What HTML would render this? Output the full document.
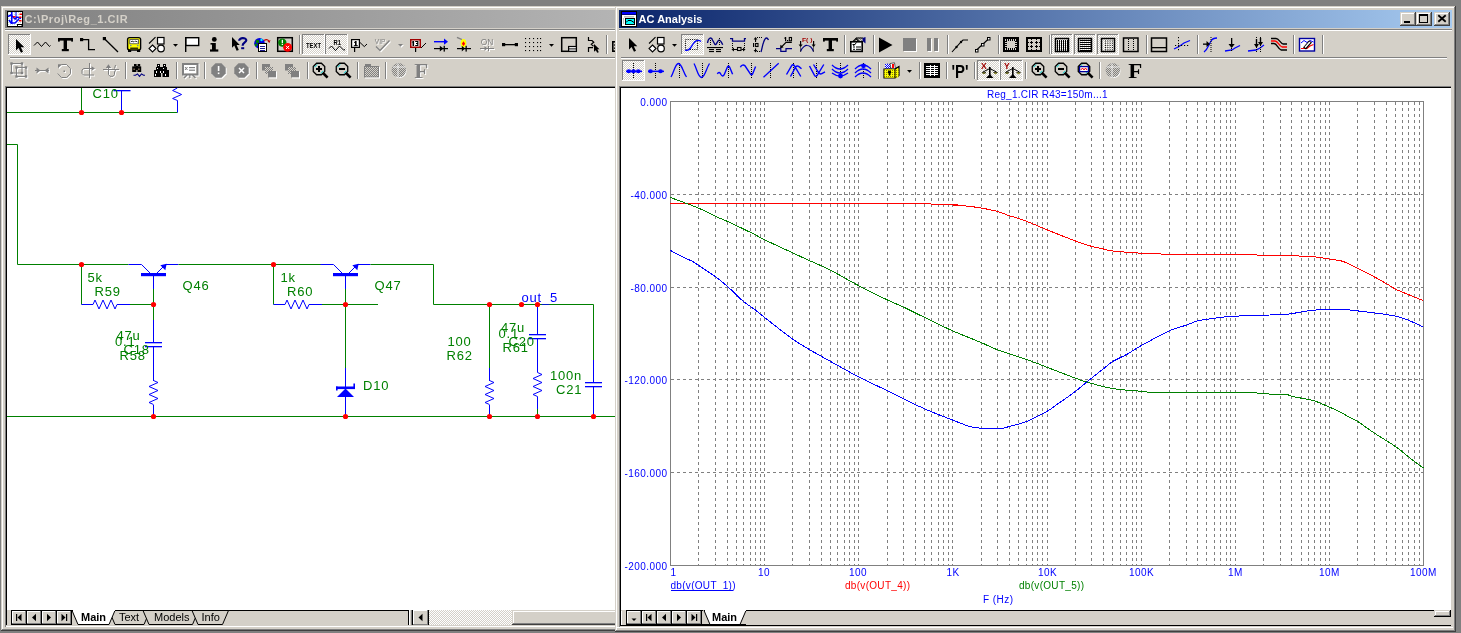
<!DOCTYPE html><html><head><meta charset="utf-8"><style>
html,body{margin:0;padding:0;width:1461px;height:633px;overflow:hidden;background:#808080;position:relative;font-family:"Liberation Sans",sans-serif}
div,span,svg{position:absolute}
svg{will-change:transform}
span{white-space:pre;line-height:1}
</style></head><body>
<svg width="0" height="0" style="left:0;top:0"><defs>
<pattern id="chk" width="2" height="2" patternUnits="userSpaceOnUse"><rect width="2" height="2" fill="#d4d0c8"/><rect width="1" height="1" fill="#fff"/><rect x="1" y="1" width="1" height="1" fill="#fff"/></pattern>
<pattern id="chkg" width="2" height="2" patternUnits="userSpaceOnUse"><rect width="2" height="2" fill="#808080"/><rect width="1" height="1" fill="#d4d0c8"/><rect x="1" y="1" width="1" height="1" fill="#d4d0c8"/></pattern>
<pattern id="chkc" width="2" height="2" patternUnits="userSpaceOnUse"><rect width="2" height="2" fill="#ffffff"/><rect width="1" height="1" fill="#c0e0e0"/></pattern>
<pattern id="chkw" width="2" height="2" patternUnits="userSpaceOnUse"><rect width="2" height="2" fill="#0000ff"/><rect width="1" height="1" fill="#ffffff"/><rect x="1" y="1" width="1" height="1" fill="#ffffff"/></pattern>
<pattern id="chky" width="2" height="2" patternUnits="userSpaceOnUse"><rect width="2" height="2" fill="#ffff00"/><rect width="1" height="1" fill="#808000"/></pattern>
</defs></svg>
<div style="left:1px;top:6px;width:620px;height:625px;background:#d4d0c8;"></div>
<div style="left:2px;top:7px;width:619px;height:1px;background:#fff;"></div>
<div style="left:2px;top:7px;width:1px;height:623px;background:#fff;"></div>
<div style="left:2px;top:629px;width:619px;height:1px;background:#808080;"></div>
<div style="left:1px;top:630px;width:620px;height:1px;background:#404040;"></div>
<div style="left:5px;top:10px;width:611px;height:18px;background:linear-gradient(90deg,#808080,#b4b4b4);"></div>
<div style="left:5px;top:29px;width:610px;height:1px;background:#808080;"></div>
<div style="left:5px;top:30px;width:610px;height:1px;background:#fff;"></div>
<div style="left:10px;top:57px;width:605px;height:1px;background:#808080;"></div>
<div style="left:10px;top:58px;width:605px;height:1px;background:#fff;"></div>
<div style="left:5px;top:86px;width:611px;height:541px;background:#fff;"></div>
<div style="left:5px;top:86px;width:610px;height:1px;background:#808080;"></div>
<div style="left:5px;top:86px;width:1px;height:541px;background:#808080;"></div>
<div style="left:6px;top:87px;width:609px;height:1px;background:#000;"></div>
<div style="left:6px;top:87px;width:1px;height:539px;background:#000;"></div>
<div style="left:6px;top:626px;width:609px;height:1px;background:#fff;"></div>
<svg style="left:0;top:0" width="616" height="633" viewBox="0 0 616 633"><polyline points="7,112.5 177.5,112.5" fill="none" stroke="#008000" stroke-width="1"/><polyline points="177.5,112.5 177.5,100.5 172.6,98.5 181.6,94.5 172.6,90.5 177.3,88" fill="none" stroke="#0000ff" stroke-width="1"/><polyline points="81.5,88 81.5,112.5" fill="none" stroke="#008000" stroke-width="1"/><polyline points="121.5,90.5 121.5,112.5" fill="none" stroke="#0000ff" stroke-width="1"/><rect x="113.5" y="90" width="17" height="1.3" fill="#0000ff"/><polyline points="7,144.5 17.5,144.5 17.5,264.5 128.5,264.5" fill="none" stroke="#008000" stroke-width="1"/><polyline points="128.5,264.5 141.5,264.5 150.5,273.5" fill="none" stroke="#0000ff" stroke-width="1"/><rect x="141.0" y="273" width="25" height="3.2" fill="#0000ff"/><polyline points="156.5,273.5 165.5,264.5 178.5,264.5" fill="none" stroke="#0000ff" stroke-width="1"/><polygon points="166.7,263.7 160.3,265.3 165.3,270.3" fill="#0000ff"/><polyline points="153.5,276 153.5,289" fill="none" stroke="#0000ff" stroke-width="1"/><polyline points="153.5,289 153.5,304.5" fill="none" stroke="#008000" stroke-width="1"/><polyline points="178.5,264.5 321.5,264.5" fill="none" stroke="#008000" stroke-width="1"/><polyline points="81.5,264.5 81.5,304.5" fill="none" stroke="#008000" stroke-width="1"/><polyline points="81.5,304.5 93,304.5" fill="none" stroke="#0000ff" stroke-width="1"/><polyline points="93,304.5 95,300.0 99,309.0 103,300.0 107,309.0 111,300.0 115,309.0 117,304.5" fill="none" stroke="#0000ff" stroke-width="1"/><polyline points="117,304.5 130,304.5" fill="none" stroke="#0000ff" stroke-width="1"/><polyline points="130,304.5 153.5,304.5" fill="none" stroke="#008000" stroke-width="1"/><polyline points="153.5,304.5 153.5,320" fill="none" stroke="#008000" stroke-width="1"/><polyline points="153.5,320 153.5,342" fill="none" stroke="#0000ff" stroke-width="1"/><rect x="145.0" y="342.0" width="17" height="1.3" fill="#0000ff"/><rect x="145.0" y="346.0" width="17" height="1.3" fill="#0000ff"/><polyline points="153.5,346.5 153.5,381" fill="none" stroke="#0000ff" stroke-width="1"/><polyline points="153.5,380.5 158.0,382.5 149.0,386.5 158.0,390.5 149.0,394.5 158.0,398.5 149.0,402.5 153.5,404.5" fill="none" stroke="#0000ff" stroke-width="1"/><polyline points="153.5,405 153.5,416.5" fill="none" stroke="#0000ff" stroke-width="1"/><polyline points="320.5,264.5 333.5,264.5 342.5,273.5" fill="none" stroke="#0000ff" stroke-width="1"/><rect x="333.0" y="273" width="25" height="3.2" fill="#0000ff"/><polyline points="348.5,273.5 357.5,264.5 370.5,264.5" fill="none" stroke="#0000ff" stroke-width="1"/><polygon points="358.7,263.7 352.3,265.3 357.3,270.3" fill="#0000ff"/><polyline points="345.5,276 345.5,289" fill="none" stroke="#0000ff" stroke-width="1"/><polyline points="345.5,289 345.5,304.5" fill="none" stroke="#008000" stroke-width="1"/><polyline points="273.5,264.5 273.5,304.5" fill="none" stroke="#008000" stroke-width="1"/><polyline points="273.5,304.5 285,304.5" fill="none" stroke="#0000ff" stroke-width="1"/><polyline points="285,304.5 287,300.0 291,309.0 295,300.0 299,309.0 303,300.0 307,309.0 309,304.5" fill="none" stroke="#0000ff" stroke-width="1"/><polyline points="309,304.5 322,304.5" fill="none" stroke="#0000ff" stroke-width="1"/><polyline points="322,304.5 378,304.5" fill="none" stroke="#008000" stroke-width="1"/><polyline points="370.5,264.5 433.5,264.5 433.5,304.5 593.5,304.5 593.5,360" fill="none" stroke="#008000" stroke-width="1"/><polyline points="345.5,304.5 345.5,368" fill="none" stroke="#008000" stroke-width="1"/><polyline points="345.5,368 345.5,416.5" fill="none" stroke="#0000ff" stroke-width="1"/><polygon points="345.5,388.5 337,397 354,397" fill="#0000ff"/><rect x="336" y="386.5" width="19" height="2.6" fill="#0000ff"/><rect x="336" y="386.5" width="1.6" height="4" fill="#0000ff"/><rect x="353.4" y="383.5" width="1.6" height="4" fill="#0000ff"/><polyline points="489.5,304.5 489.5,368" fill="none" stroke="#008000" stroke-width="1"/><polyline points="489.5,368 489.5,381" fill="none" stroke="#0000ff" stroke-width="1"/><polyline points="489.5,380.5 494.0,382.5 485.0,386.5 494.0,390.5 485.0,394.5 494.0,398.5 485.0,402.5 489.5,404.5" fill="none" stroke="#0000ff" stroke-width="1"/><polyline points="489.5,405 489.5,416.5" fill="none" stroke="#0000ff" stroke-width="1"/><polyline points="537.5,304.5 537.5,334" fill="none" stroke="#0000ff" stroke-width="1"/><rect x="529.0" y="334.0" width="17" height="1.3" fill="#0000ff"/><rect x="529.0" y="338.0" width="17" height="1.3" fill="#0000ff"/><polyline points="537.5,338.5 537.5,372.5" fill="none" stroke="#0000ff" stroke-width="1"/><polyline points="537.5,372.5 542.0,374.5 533.0,378.5 542.0,382.5 533.0,386.5 542.0,390.5 533.0,394.5 537.5,396.5" fill="none" stroke="#0000ff" stroke-width="1"/><polyline points="537.5,396.5 537.5,409" fill="none" stroke="#0000ff" stroke-width="1"/><polyline points="537.5,409 537.5,416.5" fill="none" stroke="#008000" stroke-width="1"/><polyline points="593.5,360 593.5,382" fill="none" stroke="#0000ff" stroke-width="1"/><rect x="585.0" y="382.0" width="17" height="1.3" fill="#0000ff"/><rect x="585.0" y="386.0" width="17" height="1.3" fill="#0000ff"/><polyline points="593.5,386.5 593.5,416.5" fill="none" stroke="#0000ff" stroke-width="1"/><polyline points="7,416.5 615,416.5" fill="none" stroke="#008000" stroke-width="1"/><circle cx="81.5" cy="112.5" r="2.6" fill="#ff0000"/><circle cx="121.5" cy="112.5" r="2.6" fill="#ff0000"/><circle cx="81.5" cy="264.5" r="2.6" fill="#ff0000"/><circle cx="153.5" cy="304.5" r="2.6" fill="#ff0000"/><circle cx="153.5" cy="416.5" r="2.6" fill="#ff0000"/><circle cx="273.5" cy="264.5" r="2.6" fill="#ff0000"/><circle cx="345.5" cy="304.5" r="2.6" fill="#ff0000"/><circle cx="345.5" cy="416.5" r="2.6" fill="#ff0000"/><circle cx="489.5" cy="304.5" r="2.6" fill="#ff0000"/><circle cx="521.5" cy="304.5" r="2.6" fill="#ff0000"/><circle cx="537.5" cy="304.5" r="2.6" fill="#ff0000"/><circle cx="489.5" cy="416.5" r="2.6" fill="#ff0000"/><circle cx="537.5" cy="416.5" r="2.6" fill="#ff0000"/><circle cx="593.5" cy="416.5" r="2.6" fill="#ff0000"/><text x="92.5" y="98" font-family="Liberation Sans" font-size="13" letter-spacing="0.8" fill="#008000">C10</text><text x="87.5" y="282" font-family="Liberation Sans" font-size="13" letter-spacing="0.8" fill="#008000">5k</text><text x="94.5" y="296" font-family="Liberation Sans" font-size="13" letter-spacing="0.8" fill="#008000">R59</text><text x="182.5" y="290" font-family="Liberation Sans" font-size="13" letter-spacing="0.8" fill="#008000">Q46</text><text x="116.5" y="340" font-family="Liberation Sans" font-size="13" letter-spacing="0.8" fill="#008000">47u</text><text x="115.0" y="346" font-family="Liberation Sans" font-size="13" letter-spacing="0.8" fill="#008000">0.1</text><text x="123.5" y="354" font-family="Liberation Sans" font-size="13" letter-spacing="0.8" fill="#008000">C18</text><text x="119.5" y="360" font-family="Liberation Sans" font-size="13" letter-spacing="0.8" fill="#008000">R58</text><text x="280.5" y="282" font-family="Liberation Sans" font-size="13" letter-spacing="0.8" fill="#008000">1k</text><text x="287.0" y="296" font-family="Liberation Sans" font-size="13" letter-spacing="0.8" fill="#008000">R60</text><text x="374.5" y="290" font-family="Liberation Sans" font-size="13" letter-spacing="0.8" fill="#008000">Q47</text><text x="363.0" y="390" font-family="Liberation Sans" font-size="13" letter-spacing="0.8" fill="#008000">D10</text><text x="447.5" y="346" font-family="Liberation Sans" font-size="13" letter-spacing="0.8" fill="#008000">100</text><text x="446.5" y="360" font-family="Liberation Sans" font-size="13" letter-spacing="0.8" fill="#008000">R62</text><text x="501.0" y="332" font-family="Liberation Sans" font-size="13" letter-spacing="0.8" fill="#008000">47u</text><text x="498.5" y="338" font-family="Liberation Sans" font-size="13" letter-spacing="0.8" fill="#008000">0.1</text><text x="508.5" y="346" font-family="Liberation Sans" font-size="13" letter-spacing="0.8" fill="#008000">C20</text><text x="502.5" y="352" font-family="Liberation Sans" font-size="13" letter-spacing="0.8" fill="#008000">R61</text><text x="550.0" y="380" font-family="Liberation Sans" font-size="13" letter-spacing="0.8" fill="#008000">100n</text><text x="556.0" y="394" font-family="Liberation Sans" font-size="13" letter-spacing="0.8" fill="#008000">C21</text><text x="521.5" y="302" font-family="Liberation Sans" font-size="13" letter-spacing="0.8" fill="#0000ff">out_5</text></svg>
<svg style="left:0;top:0" width="616" height="90" viewBox="0 0 616 90"><rect x="8" y="34" width="23" height="21" fill="url(#chk)"/><rect x="8" y="34" width="23" height="1" fill="#808080" /><rect x="8" y="34" width="1" height="21" fill="#808080" /><rect x="8" y="54" width="23" height="1" fill="#fff" /><rect x="30" y="34" width="1" height="21" fill="#fff" /><polygon points="16,39 16,50.5 18.6,48 21,52.8 23,51.8 20.8,47.2 24.3,47.2" fill="#000" /><polyline points="34,45.5 37.5,42 41.5,46.5 45.5,42 49.5,46.5 50.5,45.5" fill="none" stroke="#000" stroke-width="1" /><rect x="58" y="38" width="15" height="2.6" fill="#000" /><rect x="58" y="38" width="1.8" height="3.6" fill="#000" /><rect x="71.2" y="38" width="1.8" height="3.6" fill="#000" /><rect x="63.6" y="38" width="3.4" height="12" fill="#000" /><rect x="61.8" y="49" width="7" height="2.2" fill="#000" /><rect x="80" y="38" width="3.2" height="3.2" fill="#000" /><polyline points="83,39.6 88.6,39.6 88.6,49.6 95,49.6" fill="none" stroke="#000" stroke-width="1.3" /><rect x="102.8" y="37" width="3.2" height="3.2" fill="#000" /><polyline points="105,39.2 118,52" fill="none" stroke="#000" stroke-width="1.3" /><rect x="127.6" y="37.6" width="13" height="12.4" rx="2" fill="#ffff00" stroke="#000" stroke-width="1.4"/><rect x="129.8" y="39.6" width="8.6" height="4.2" fill="#fff" /><rect x="129.8" y="39.6" width="8.6" height="4.2" fill="none" stroke="#404040" stroke-width="0.8" /><polyline points="131,42 132,41 134,42" fill="none" stroke="#000" stroke-width="0.8" /><polyline points="134.5,42 135.5,41 137.5,42" fill="none" stroke="#000" stroke-width="0.8" /><rect x="130" y="45" width="1.5" height="1.2" fill="#6080c0" /><rect x="137" y="45" width="1.5" height="1.2" fill="#6080c0" /><rect x="130.2" y="47.6" width="8" height="1.2" fill="#000" /><rect x="128" y="49.8" width="3.2" height="2.2" fill="#000" /><rect x="137" y="49.8" width="3.2" height="2.2" fill="#000" /><polyline points="149,43.5 155.5,37.2" fill="none" stroke="#000" stroke-width="1.1" /><rect x="157.5" y="37.5" width="6.5" height="6.5" fill="#fff" stroke="#000" stroke-width="1.2" /><polygon points="152.5,45 156,48.5 152.5,52 149,48.5" fill="#fff" stroke="#000" stroke-width="1.1"/><circle cx="161" cy="48.5" r="3.3" fill="#fff" stroke="#000" stroke-width="1.2"/><polygon points="173,44 178,44 175.5,46.8" fill="#000" /><rect x="185.7" y="37.7" width="13" height="7.8" fill="#fff" stroke="#000" stroke-width="1.4" /><rect x="185" y="37" width="1.4" height="15" fill="#000" /><circle cx="214.3" cy="39.4" r="2.4" fill="#000" stroke="none" stroke-width="1"/><rect x="212" y="43" width="3.8" height="7.5" fill="#000" /><rect x="210.5" y="43" width="2" height="1.6" fill="#000" /><rect x="210" y="49.4" width="8.3" height="2.2" fill="#000" /><polygon points="232,37 232,47.8 234.3,45.6 236.6,50.8 238.8,50 236.6,45 239.8,45" fill="#000" /><path d="M239.2 40.8 C239 37.3 246.4 37.3 246.3 40.3 C246.2 42.6 242.6 42.3 242.6 45.8" fill="none" stroke="#000080" stroke-width="2.2"/><rect x="241.2" y="47.2" width="3" height="2" fill="#000080" /><circle cx="259.5" cy="43.3" r="5.3" fill="#0000e0" stroke="none" stroke-width="1"/><circle cx="257.5" cy="41.5" r="1.8" fill="#008000" stroke="none" stroke-width="1"/><circle cx="261.5" cy="40" r="1.2" fill="#00ffff" stroke="none" stroke-width="1"/><circle cx="256" cy="45" r="1.4" fill="#008000" stroke="none" stroke-width="1"/><rect x="258.5" y="43.5" width="8" height="8" fill="#fff" stroke="#000" stroke-width="1" /><rect x="260" y="46" width="5" height="0.9" fill="#000080" /><rect x="260" y="48" width="5" height="0.9" fill="#000080" /><rect x="260" y="50" width="5" height="0.9" fill="#000080" /><path d="M264 40.5 Q267 38.5 269 41" fill="none" stroke="#c00000" stroke-width="1.2"/><polygon points="267.5,41.5 270.5,40 269.5,43" fill="#c00000" /><rect x="277.7" y="37.7" width="14.6" height="13.6" fill="none" stroke="#000" stroke-width="1.5" /><circle cx="282.3" cy="42.6" r="4.2" fill="#008000" stroke="none" stroke-width="1"/><rect x="281.7" y="39.8" width="1.3" height="3.3" fill="#fff" /><rect x="281.7" y="43.8" width="1.3" height="1.2" fill="#fff" /><circle cx="287.6" cy="47.3" r="4.4" fill="#ff0000" stroke="none" stroke-width="1"/><polyline points="286,45.8 289.2,49" fill="none" stroke="#fff" stroke-width="1" /><polyline points="289.2,45.8 286,49" fill="none" stroke="#fff" stroke-width="1" /><rect x="299" y="35" width="1" height="19" fill="#808080" /><rect x="300" y="35" width="1" height="19" fill="#fff" /><rect x="302" y="34" width="23" height="21" fill="url(#chk)"/><rect x="302" y="34" width="23" height="1" fill="#808080" /><rect x="302" y="34" width="1" height="21" fill="#808080" /><rect x="302" y="54" width="23" height="1" fill="#fff" /><rect x="324" y="34" width="1" height="21" fill="#fff" /><text x="306" y="47.6" font-family="Liberation Sans" font-size="7.2" font-weight="bold" fill="#000" textLength="15" lengthAdjust="spacingAndGlyphs">TEXT</text><rect x="325" y="34" width="23" height="21" fill="url(#chk)"/><rect x="325" y="34" width="23" height="1" fill="#808080" /><rect x="325" y="34" width="1" height="21" fill="#808080" /><rect x="325" y="54" width="23" height="1" fill="#fff" /><rect x="347" y="34" width="1" height="21" fill="#fff" /><text x="333.6" y="44.8" font-family="Liberation Sans" font-size="6.8" font-weight="bold" fill="#000" textLength="7.5" lengthAdjust="spacingAndGlyphs">R1</text><polyline points="329,48.5 331.5,46 335.5,50.6 339.5,46 343.8,50.3 345,49.3" fill="none" stroke="#000" stroke-width="1" /><rect x="351" y="39" width="9" height="9" fill="#000" /><rect x="352.2" y="40.2" width="6.6" height="6.6" fill="#fff" /><rect x="355" y="41" width="1.6" height="5" fill="#000" /><rect x="354" y="41.8" width="1" height="1" fill="#000" /><rect x="353.8" y="45.2" width="4" height="1" fill="#000" /><rect x="354" y="48" width="1.2" height="4" fill="#000" /><polyline points="359.5,42 364.3,46.6 367,44" fill="none" stroke="#000" stroke-width="1" /><g transform="translate(1,1)"><text x="374.8" y="43.6" font-family="Liberation Sans" font-size="7" font-weight="normal" fill="#fff" textLength="10.5" lengthAdjust="spacingAndGlyphs">VIP</text><polyline points="376,46.5 380,50.5 389.5,40.5" fill="none" stroke="#fff" stroke-width="1.3" /></g><text x="374.8" y="43.6" font-family="Liberation Sans" font-size="7" font-weight="normal" fill="#808080" textLength="10.5" lengthAdjust="spacingAndGlyphs">VIP</text><polyline points="376,46.5 380,50.5 389.5,40.5" fill="none" stroke="#808080" stroke-width="1.3" /><g transform="translate(1,1)"><polygon points="398,44 403,44 400.5,46.8" fill="#fff" /></g><polygon points="398,44 403,44 400.5,46.8" fill="#808080" /><rect x="410" y="39" width="11" height="9" fill="#a00000" /><rect x="411.5" y="40.5" width="8" height="6" fill="#fff" /><rect x="412.5" y="41" width="1.6" height="5" fill="#000" /><rect x="411.8" y="41.6" width="1" height="1" fill="#000" /><polyline points="415.2,41.5 417.8,41.5 417.8,45.5 415.2,45.5" fill="none" stroke="#000" stroke-width="1.2" /><rect x="416" y="43" width="2" height="1" fill="#000" /><rect x="415" y="48" width="1.2" height="4" fill="#000" /><polyline points="421,48 426,43" fill="none" stroke="#000" stroke-width="1" /><rect x="434" y="41" width="11" height="1.4" fill="#0000ff" /><polygon points="444,38.6 448,41.7 444,44.8" fill="#0000ff" /><rect x="434" y="48" width="14" height="1.2" fill="#000" /><polygon points="439.8,45.8 443.5,48.6 439.8,51.4" fill="#000" /><rect x="443.6" y="45.8" width="1.3" height="5.8" fill="#000" /><polyline points="457,37.4 462,39.6" fill="none" stroke="#808080" stroke-width="1.4" /><ellipse cx="463.5" cy="43.3" rx="2.8" ry="4.2" fill="#ffff00"/><polygon points="463.5,41.3 465.2,43.8 463.5,46 461.8,43.8" fill="#ff0000" /><rect x="457" y="48" width="14" height="1.2" fill="#000" /><polygon points="461.8,45.8 465,48.6 461.8,51.4" fill="#000" /><rect x="465.5" y="45.8" width="1.3" height="5.8" fill="#000" /><g transform="translate(1,1)"><text x="480.8" y="45" font-family="Liberation Sans" font-size="9.5" font-weight="normal" fill="#fff" textLength="12.5" lengthAdjust="spacingAndGlyphs">ON</text><rect x="480" y="48" width="14" height="1" fill="#fff" /><polygon points="484.5,46.2 487.5,48.5 484.5,50.8" fill="#fff" /><rect x="488" y="46" width="1" height="5" fill="#fff" /></g><text x="480.8" y="45" font-family="Liberation Sans" font-size="9.5" font-weight="normal" fill="#808080" textLength="12.5" lengthAdjust="spacingAndGlyphs">ON</text><rect x="480" y="48" width="14" height="1" fill="#808080" /><polygon points="484.5,46.2 487.5,48.5 484.5,50.8" fill="#808080" /><rect x="488" y="46" width="1" height="5" fill="#808080" /><rect x="502" y="43" width="3.2" height="3.2" fill="#000" /><rect x="505" y="44" width="10" height="1.3" fill="#000" /><rect x="514.8" y="43" width="3.2" height="3.2" fill="#000" /><rect x="525" y="38" width="1.1" height="1.1" fill="#000" /><rect x="525" y="42" width="1.1" height="1.1" fill="#000" /><rect x="525" y="46" width="1.1" height="1.1" fill="#000" /><rect x="525" y="50" width="1.1" height="1.1" fill="#000" /><rect x="529" y="38" width="1.1" height="1.1" fill="#000" /><rect x="529" y="42" width="1.1" height="1.1" fill="#000" /><rect x="529" y="46" width="1.1" height="1.1" fill="#000" /><rect x="529" y="50" width="1.1" height="1.1" fill="#000" /><rect x="533" y="38" width="1.1" height="1.1" fill="#000" /><rect x="533" y="42" width="1.1" height="1.1" fill="#000" /><rect x="533" y="46" width="1.1" height="1.1" fill="#000" /><rect x="533" y="50" width="1.1" height="1.1" fill="#000" /><rect x="537" y="38" width="1.1" height="1.1" fill="#000" /><rect x="537" y="42" width="1.1" height="1.1" fill="#000" /><rect x="537" y="46" width="1.1" height="1.1" fill="#000" /><rect x="537" y="50" width="1.1" height="1.1" fill="#000" /><rect x="540" y="38" width="1.1" height="1.1" fill="#000" /><rect x="540" y="42" width="1.1" height="1.1" fill="#000" /><rect x="540" y="46" width="1.1" height="1.1" fill="#000" /><rect x="540" y="50" width="1.1" height="1.1" fill="#000" /><polygon points="549,44 554,44 551.5,46.8" fill="#000" /><rect x="561.7" y="37.7" width="14.6" height="13.6" fill="none" stroke="#000" stroke-width="1.5" /><rect x="568.6" y="46.5" width="7.8" height="4.8" fill="#fff" stroke="#000" stroke-width="1.2" /><rect x="569" y="48.4" width="7" height="1" fill="#000" /><polyline points="588.5,37 588.5,40.5 592,40.5 593.8,42.3 591.3,44.3 593.5,46.3" fill="none" stroke="#000" stroke-width="1.2" /><polyline points="588.5,52 588.5,47.6 593,47.6" fill="none" stroke="#000" stroke-width="1.2" /><polygon points="594,44 594,51.8 595.8,50.2 597.2,52.8 598.8,52.2 597.4,49.3 599.5,49.3" fill="#000" /><rect x="606" y="35" width="1" height="19" fill="#808080" /><rect x="607" y="35" width="1" height="19" fill="#fff" /><rect x="612" y="41" width="1.6" height="11" fill="#000" /><rect x="612" y="41" width="5" height="1.6" fill="#000" /><rect x="612" y="50.4" width="5" height="1.6" fill="#000" /><rect x="614.2" y="44.2" width="1.6" height="1.6" fill="#000" /><rect x="614.2" y="47.4" width="1.6" height="1.6" fill="#000" /><g transform="translate(1,1)"><rect x="11.5" y="63.5" width="10.5" height="9.5" fill="none" stroke="#fff" stroke-width="1" /><rect x="16.5" y="67.5" width="9.5" height="9" fill="none" stroke="#fff" stroke-width="1" /><rect x="10.3" y="62.3" width="2.4" height="2.4" fill="#fff" /><rect x="20.8" y="62.3" width="2.4" height="2.4" fill="#fff" /><rect x="10.3" y="71.8" width="2.4" height="2.4" fill="#fff" /><rect x="15.3" y="66.3" width="2.4" height="2.4" fill="#fff" /><rect x="24.8" y="66.3" width="2.4" height="2.4" fill="#fff" /><rect x="15.3" y="75.3" width="2.4" height="2.4" fill="#fff" /><rect x="24.8" y="75.3" width="2.4" height="2.4" fill="#fff" /><rect x="20.8" y="71.8" width="2.4" height="2.4" fill="#fff" /></g><rect x="11.5" y="63.5" width="10.5" height="9.5" fill="none" stroke="#808080" stroke-width="1" /><rect x="16.5" y="67.5" width="9.5" height="9" fill="none" stroke="#808080" stroke-width="1" /><rect x="10.3" y="62.3" width="2.4" height="2.4" fill="#808080" /><rect x="20.8" y="62.3" width="2.4" height="2.4" fill="#808080" /><rect x="10.3" y="71.8" width="2.4" height="2.4" fill="#808080" /><rect x="15.3" y="66.3" width="2.4" height="2.4" fill="#808080" /><rect x="24.8" y="66.3" width="2.4" height="2.4" fill="#808080" /><rect x="15.3" y="75.3" width="2.4" height="2.4" fill="#808080" /><rect x="24.8" y="75.3" width="2.4" height="2.4" fill="#808080" /><rect x="20.8" y="71.8" width="2.4" height="2.4" fill="#808080" /><g transform="translate(1,1)"><rect x="35" y="70" width="14" height="1" fill="#fff" /><polygon points="36.5,67.5 40.5,70.5 36.5,73.5" fill="#fff" /><polygon points="48.5,67.5 44.5,70.5 48.5,73.5" fill="#fff" /></g><rect x="35" y="70" width="14" height="1" fill="#808080" /><polygon points="36.5,67.5 40.5,70.5 36.5,73.5" fill="#808080" /><polygon points="48.5,67.5 44.5,70.5 48.5,73.5" fill="#808080" /><g transform="translate(1,1)"><polyline points="61.5,64.5 66.5,64.5 70.5,68.6 70.5,73.5 66.6,77.5 61.5,77.5 57.7,73.5" fill="none" stroke="#fff" stroke-width="1" /><rect x="63.5" y="70.5" width="1.5" height="1.5" fill="#fff" /><polygon points="58,64.2 62.2,64.2 58,68.2" fill="#fff" /></g><polyline points="61.5,64.5 66.5,64.5 70.5,68.6 70.5,73.5 66.6,77.5 61.5,77.5 57.7,73.5" fill="none" stroke="#808080" stroke-width="1" /><rect x="63.5" y="70.5" width="1.5" height="1.5" fill="#808080" /><polygon points="58,64.2 62.2,64.2 58,68.2" fill="#808080" /><g transform="translate(1,1)"><rect x="89" y="63" width="1" height="15" fill="#fff" /><polyline points="89,68.5 83.5,68.5 82,70 82,73.5 83.5,75 89,75" fill="none" stroke="#fff" stroke-width="1" /><rect x="89.5" y="68" width="3" height="1" fill="#fff" /><polygon points="91.5,66.3 95,68.5 91.5,70.7" fill="#fff" /><rect x="89.5" y="74.5" width="4.5" height="1" fill="#fff" /></g><rect x="89" y="63" width="1" height="15" fill="#808080" /><polyline points="89,68.5 83.5,68.5 82,70 82,73.5 83.5,75 89,75" fill="none" stroke="#808080" stroke-width="1" /><rect x="89.5" y="68" width="3" height="1" fill="#808080" /><polygon points="91.5,66.3 95,68.5 91.5,70.7" fill="#808080" /><rect x="89.5" y="74.5" width="4.5" height="1" fill="#808080" /><g transform="translate(1,1)"><rect x="103" y="69" width="16" height="1" fill="#fff" /><polyline points="108.5,69.5 108.5,74.5 110,76.3 113,76.3 114.5,74.5 114.5,72 115.5,70" fill="none" stroke="#fff" stroke-width="1" /><polygon points="105.8,68 108.5,64.3 111.2,68" fill="#fff" /><rect x="108" y="66" width="1" height="3" fill="#fff" /><polyline points="114.5,68.5 115.5,65" fill="none" stroke="#fff" stroke-width="1" /></g><rect x="103" y="69" width="16" height="1" fill="#808080" /><polyline points="108.5,69.5 108.5,74.5 110,76.3 113,76.3 114.5,74.5 114.5,72 115.5,70" fill="none" stroke="#808080" stroke-width="1" /><polygon points="105.8,68 108.5,64.3 111.2,68" fill="#808080" /><rect x="108" y="66" width="1" height="3" fill="#808080" /><polyline points="114.5,68.5 115.5,65" fill="none" stroke="#808080" stroke-width="1" /><rect x="125" y="62" width="1" height="17" fill="#808080" /><rect x="126" y="62" width="1" height="17" fill="#fff" /><rect x="134" y="64" width="2.6" height="2.6" fill="#000" /><rect x="137.6" y="64" width="2.6" height="2.6" fill="#000" /><rect x="132.2" y="66.4" width="4.2" height="5.6" fill="#000" /><rect x="137.4" y="66.4" width="3.8" height="5.6" fill="#000" /><rect x="135.8" y="66" width="2.2" height="4" fill="#000" /><rect x="133.6" y="68.5" width="1" height="1.5" fill="#c0a080" /><rect x="138.4" y="68.5" width="1" height="1.5" fill="#c0a080" /><polyline points="133.5,75.3 135.5,75.3 137.5,73.9 139.5,76.3 141.5,73.9 143.5,75.3 145,75.3" fill="none" stroke="#000080" stroke-width="1.1" /><rect x="157" y="64" width="3" height="3" fill="#000" /><rect x="163" y="64" width="3" height="3" fill="#000" /><rect x="156" y="67" width="5" height="3" fill="#000" /><rect x="162" y="67" width="5" height="3" fill="#000" /><rect x="154" y="70" width="7" height="7" fill="#000" /><rect x="162.5" y="70" width="6.5" height="7" fill="#000" /><rect x="160" y="67" width="3" height="6" fill="#000" /><rect x="158" y="65" width="1" height="1" fill="#fff" /><rect x="164" y="65" width="1" height="1" fill="#fff" /><rect x="157" y="68" width="1" height="1" fill="#fff" /><rect x="163" y="68" width="1" height="1" fill="#fff" /><rect x="156" y="71" width="1" height="2" fill="#fff" /><rect x="160" y="71" width="1" height="2" fill="#fff" /><rect x="163" y="71" width="1" height="2" fill="#fff" /><rect x="155" y="74" width="1" height="2" fill="#fff" /><rect x="165" y="74" width="1" height="2" fill="#fff" /><rect x="176" y="62" width="1" height="17" fill="#808080" /><rect x="177" y="62" width="1" height="17" fill="#fff" /><rect x="184" y="65.5" width="12" height="8" fill="#fff" /><g transform="translate(1,1)"><rect x="183" y="64" width="14.5" height="10.5" fill="none" stroke="#fff" stroke-width="2" /><polyline points="185,67 187.5,70" fill="none" stroke="#fff" stroke-width="1" /><polyline points="187.5,67 185,70" fill="none" stroke="#fff" stroke-width="1" /><rect x="189" y="67" width="6" height="1.2" fill="#fff" /><rect x="189" y="69.6" width="6" height="1.2" fill="#fff" /><polyline points="187,75 184,78" fill="none" stroke="#fff" stroke-width="1.4" /><polyline points="192.5,75 195.5,78" fill="none" stroke="#fff" stroke-width="1.4" /><rect x="189.2" y="75" width="1.2" height="3" fill="#fff" /></g><rect x="183" y="64" width="14.5" height="10.5" fill="none" stroke="#808080" stroke-width="2" /><polyline points="185,67 187.5,70" fill="none" stroke="#808080" stroke-width="1" /><polyline points="187.5,67 185,70" fill="none" stroke="#808080" stroke-width="1" /><rect x="189" y="67" width="6" height="1.2" fill="#808080" /><rect x="189" y="69.6" width="6" height="1.2" fill="#808080" /><polyline points="187,75 184,78" fill="none" stroke="#808080" stroke-width="1.4" /><polyline points="192.5,75 195.5,78" fill="none" stroke="#808080" stroke-width="1.4" /><rect x="189.2" y="75" width="1.2" height="3" fill="#808080" /><rect x="204" y="62" width="1" height="17" fill="#808080" /><rect x="205" y="62" width="1" height="17" fill="#fff" /><g transform="translate(1,1)"><polygon points="225.70626035358805,73.4849307724477 221.4849307724477,77.70626035358804 215.5150692275523,77.70626035358804 211.29373964641195,73.4849307724477 211.29373964641195,67.5150692275523 215.5150692275523,63.293739646411964 221.4849307724477,63.293739646411964 225.70626035358805,67.5150692275523" fill="#fff" /></g><polygon points="225.70626035358805,73.4849307724477 221.4849307724477,77.70626035358804 215.5150692275523,77.70626035358804 211.29373964641195,73.4849307724477 211.29373964641195,67.5150692275523 215.5150692275523,63.293739646411964 221.4849307724477,63.293739646411964 225.70626035358805,67.5150692275523" fill="#808080" /><rect x="217.8" y="66" width="1.6" height="5" fill="#fff" /><rect x="217.8" y="72.5" width="1.6" height="1.6" fill="#fff" /><g transform="translate(1,1)"><polygon points="248.70626035358805,73.4849307724477 244.4849307724477,77.70626035358804 238.5150692275523,77.70626035358804 234.29373964641195,73.4849307724477 234.29373964641195,67.5150692275523 238.5150692275523,63.293739646411964 244.4849307724477,63.293739646411964 248.70626035358805,67.5150692275523" fill="#fff" /></g><polygon points="248.70626035358805,73.4849307724477 244.4849307724477,77.70626035358804 238.5150692275523,77.70626035358804 234.29373964641195,73.4849307724477 234.29373964641195,67.5150692275523 238.5150692275523,63.293739646411964 244.4849307724477,63.293739646411964 248.70626035358805,67.5150692275523" fill="#808080" /><polyline points="239,68 244,73" fill="none" stroke="#fff" stroke-width="1.4" /><polyline points="244,68 239,73" fill="none" stroke="#fff" stroke-width="1.4" /><rect x="256" y="62" width="1" height="17" fill="#808080" /><rect x="257" y="62" width="1" height="17" fill="#fff" /><rect x="262" y="64" width="8" height="6.5" fill="#808080" /><rect x="265" y="67" width="8" height="7" fill="#a8a8a8" /><rect x="265" y="67" width="8" height="7" fill="url(#chkg)" /><rect x="268" y="71" width="8" height="6.5" fill="#808080" /><rect x="269" y="77.5" width="8" height="1" fill="#fff" /><rect x="276" y="71.5" width="1" height="7" fill="#fff" /><rect x="285" y="64" width="8" height="6.5" fill="#808080" /><rect x="288" y="67" width="8" height="7" fill="#a8a8a8" /><rect x="288" y="67" width="8" height="7" fill="url(#chkg)" /><rect x="291" y="71" width="8" height="6.5" fill="#808080" /><rect x="292" y="77.5" width="8" height="1" fill="#fff" /><rect x="299" y="71.5" width="1" height="7" fill="#fff" /><rect x="307" y="62" width="1" height="17" fill="#808080" /><rect x="308" y="62" width="1" height="17" fill="#fff" /><polygon points="324.73,71.37 321.37,74.73 316.63,74.73 313.27,71.37 313.27,66.63 316.63,63.27 321.37,63.27 324.73,66.63" fill="none" stroke="#000" stroke-width="1.3"/><polyline points="323,73 327.6,77.6" fill="none" stroke="#000" stroke-width="2.6" /><polyline points="314.6,67.2 317.2,64.6" fill="none" stroke="#00e0e0" stroke-width="1" /><polyline points="320.8,73.4 323.4,70.8" fill="none" stroke="#00e0e0" stroke-width="1" /><rect x="316" y="68" width="6" height="2" fill="#000" /><rect x="318" y="66" width="2" height="6" fill="#000" /><polygon points="347.73,71.37 344.37,74.73 339.63,74.73 336.27,71.37 336.27,66.63 339.63,63.27 344.37,63.27 347.73,66.63" fill="none" stroke="#000" stroke-width="1.3"/><polyline points="346,73 350.6,77.6" fill="none" stroke="#000" stroke-width="2.6" /><polyline points="337.6,67.2 340.2,64.6" fill="none" stroke="#00e0e0" stroke-width="1" /><polyline points="343.8,73.4 346.4,70.8" fill="none" stroke="#00e0e0" stroke-width="1" /><rect x="339" y="68" width="6" height="2" fill="#000" /><rect x="357" y="62" width="1" height="17" fill="#808080" /><rect x="358" y="62" width="1" height="17" fill="#fff" /><rect x="364" y="66" width="15" height="11" fill="url(#chkg)" /><rect x="364.5" y="66.5" width="14" height="10.5" fill="none" stroke="#808080" stroke-width="1" /><rect x="365" y="64" width="6" height="2.5" fill="#808080" /><rect x="365" y="77.5" width="15" height="1" fill="#fff" /><rect x="379" y="67" width="1" height="11" fill="#fff" /><rect x="385" y="62" width="1" height="17" fill="#808080" /><rect x="386" y="62" width="1" height="17" fill="#fff" /><circle cx="399.5" cy="71" r="7" fill="#fff" stroke="none" stroke-width="1"/><circle cx="398.8" cy="70.3" r="7" fill="#a0a0a0" stroke="none" stroke-width="1"/><circle cx="398.8" cy="70.3" r="7" fill="url(#chkg)" stroke="none" stroke-width="1"/><polyline points="393,67 405,67" fill="none" stroke="#fff" stroke-width="0.8" /><polyline points="398,63.5 398,77" fill="none" stroke="#fff" stroke-width="0.8" /><g transform="translate(1,1)"><text x="414.3" y="77.6" font-family="Liberation Serif" font-size="21" font-weight="bold" fill="#fff" textLength="14" lengthAdjust="spacingAndGlyphs">F</text></g><text x="414.3" y="77.6" font-family="Liberation Serif" font-size="21" font-weight="bold" fill="#808080" textLength="14" lengthAdjust="spacingAndGlyphs">F</text></svg>
<svg style="left:0;top:0" width="616" height="633" viewBox="0 0 616 633"><rect x="7" y="11" width="16" height="16" fill="#000" /><rect x="8" y="12" width="14" height="14" fill="#e0ecec" /><rect x="8" y="12" width="14" height="14" fill="url(#chkc)" /><rect x="11" y="12" width="1.5" height="12" fill="#0000ff" /><rect x="15.5" y="12" width="1" height="8" fill="#0000ff" /><polyline points="8,16.5 11,15 15,19 17,17 21,18.5" fill="none" stroke="#0000ff" stroke-width="1.5" /><polyline points="9,20 11,23 15,23 19,19" fill="none" stroke="#0000ff" stroke-width="1.5" /><rect x="19.5" y="13.5" width="2.5" height="1.5" fill="#ff0000" /><rect x="13" y="16" width="2.5" height="1.5" fill="#ff0000" /><rect x="19" y="16.5" width="2.5" height="1.5" fill="#ff0000" /><rect x="19" y="20" width="2.5" height="1.5" fill="#ff0000" /><rect x="17" y="24" width="6" height="3" fill="#000" /><rect x="18" y="25" width="3.5" height="1" fill="#fff" /><text x="24.6" y="23" font-family="Liberation Sans" font-size="11" font-weight="bold" fill="#d4d0c8" letter-spacing="0.56">C:\Proj\Reg_1.CIR</text><rect x="7" y="610" width="608" height="16" fill="#d4d0c8" /><rect x="11" y="610" width="398" height="1" fill="#000" /><rect x="11" y="624" width="60" height="1" fill="#000" /><rect x="11" y="610" width="1" height="15" fill="#000" /><rect x="12" y="611" width="14" height="13" fill="#d4d0c8" /><rect x="12" y="611" width="1" height="13" fill="#fff" /><rect x="12" y="611" width="14" height="1" fill="#fff" /><rect x="25" y="611" width="1" height="13" fill="#808080" /><rect x="12" y="623" width="14" height="1" fill="#808080" /><rect x="16.0" y="614.0" width="1.2" height="7" fill="#000" /><polygon points="17.5,617.5 21.5,613.7 21.5,621.3" fill="#000" /><rect x="26" y="610" width="1" height="15" fill="#000" /><rect x="27" y="611" width="14" height="13" fill="#d4d0c8" /><rect x="27" y="611" width="1" height="13" fill="#fff" /><rect x="27" y="611" width="14" height="1" fill="#fff" /><rect x="40" y="611" width="1" height="13" fill="#808080" /><rect x="27" y="623" width="14" height="1" fill="#808080" /><polygon points="32.0,617.5 36.0,613.7 36.0,621.3" fill="#000" /><rect x="41" y="610" width="1" height="15" fill="#000" /><rect x="42" y="611" width="14" height="13" fill="#d4d0c8" /><rect x="42" y="611" width="1" height="13" fill="#fff" /><rect x="42" y="611" width="14" height="1" fill="#fff" /><rect x="55" y="611" width="1" height="13" fill="#808080" /><rect x="42" y="623" width="14" height="1" fill="#808080" /><polygon points="51.0,617.5 47.0,613.7 47.0,621.3" fill="#000" /><rect x="56" y="610" width="1" height="15" fill="#000" /><rect x="57" y="611" width="14" height="13" fill="#d4d0c8" /><rect x="57" y="611" width="1" height="13" fill="#fff" /><rect x="57" y="611" width="14" height="1" fill="#fff" /><rect x="70" y="611" width="1" height="13" fill="#808080" /><rect x="57" y="623" width="14" height="1" fill="#808080" /><rect x="66.0" y="614.0" width="1.2" height="7" fill="#000" /><polygon points="65.5,617.5 61.5,613.7 61.5,621.3" fill="#000" /><rect x="71" y="610" width="1" height="15" fill="#000" /><polygon points="109,610.5 115,624.5 144,624.5 150,610.5" fill="#d4d0c8" stroke="#000" stroke-width="1"/><text x="119" y="621.4" font-family="Liberation Sans" font-size="11" font-weight="normal" fill="#000" >Text</text><polygon points="143,610.5 149,624.5 192.5,624.5 198.5,610.5" fill="#d4d0c8" stroke="#000" stroke-width="1"/><text x="154" y="621.4" font-family="Liberation Sans" font-size="11" font-weight="normal" fill="#000" >Models</text><polygon points="192,610.5 198,624.5 222.5,624.5 228.5,610.5" fill="#d4d0c8" stroke="#000" stroke-width="1"/><text x="201.5" y="621.4" font-family="Liberation Sans" font-size="11" font-weight="normal" fill="#000" >Info</text><polygon points="72,610.5 78,624.5 109,624.5 115,610.5" fill="#fff" stroke="#000" stroke-width="1"/><rect x="73" y="609.6" width="42" height="1.4" fill="#fff" /><text x="81" y="621.4" font-family="Liberation Sans" font-size="11" font-weight="bold" fill="#000" >Main</text><rect x="408" y="610" width="1" height="15" fill="#000" /><rect x="409" y="610" width="1" height="15" fill="#fff" /><rect x="411" y="610" width="1" height="15" fill="#808080" /><rect x="412" y="610" width="1" height="15" fill="#000" /><rect x="413" y="610" width="15" height="15" fill="#d4d0c8" /><rect x="413" y="610" width="1" height="15" fill="#fff" /><rect x="413" y="610" width="15" height="1" fill="#fff" /><rect x="427" y="610" width="1" height="15" fill="#808080" /><rect x="413" y="624" width="15" height="1" fill="#808080" /><polygon points="418.5,617.5 422.5,613.7 422.5,621.3" fill="#000" /><rect x="428" y="610" width="1" height="15" fill="#000" /><rect x="429" y="610" width="83" height="15" fill="url(#chk)" /><rect x="512" y="610" width="105" height="15" fill="#d4d0c8" /><rect x="512" y="610" width="105" height="1" fill="#d4d0c8" /><rect x="512" y="610" width="1" height="15" fill="#d4d0c8" /><rect x="513" y="611" width="103" height="1" fill="#fff" /><rect x="513" y="611" width="1" height="13" fill="#fff" /><rect x="513" y="623" width="103" height="1" fill="#808080" /><rect x="615" y="611" width="1" height="13" fill="#808080" /><rect x="512" y="624" width="105" height="1" fill="#404040" /><rect x="616" y="610" width="1" height="15" fill="#404040" /><rect x="6" y="625" width="610" height="1" fill="#d4d0c8" /><rect x="6" y="626" width="610" height="1" fill="#fff" /></svg>
<div style="left:615px;top:6px;width:841px;height:625px;background:#d4d0c8;"></div>
<div style="left:615px;top:6px;width:841px;height:1px;background:#d4d0c8;"></div>
<div style="left:616px;top:7px;width:839px;height:1px;background:#fff;"></div>
<div style="left:616px;top:7px;width:1px;height:623px;background:#fff;"></div>
<div style="left:1454px;top:7px;width:1px;height:624px;background:#808080;"></div>
<div style="left:1455px;top:6px;width:1px;height:626px;background:#404040;"></div>
<div style="left:616px;top:630px;width:839px;height:1px;background:#808080;"></div>
<div style="left:615px;top:631px;width:841px;height:1px;background:#404040;"></div>
<div style="left:619px;top:10px;width:833px;height:18px;background:linear-gradient(90deg,#0a246a,#a6caf0);"></div>
<div style="left:619px;top:29px;width:833px;height:1px;background:#808080;"></div>
<div style="left:619px;top:30px;width:833px;height:1px;background:#fff;"></div>
<div style="left:621px;top:57px;width:826px;height:1px;background:#808080;"></div>
<div style="left:621px;top:58px;width:826px;height:1px;background:#fff;"></div>
<div style="left:619px;top:86px;width:832px;height:539px;background:#fff;"></div>
<div style="left:619px;top:86px;width:832px;height:1px;background:#808080;"></div>
<div style="left:619px;top:86px;width:1px;height:541px;background:#808080;"></div>
<div style="left:620px;top:87px;width:831px;height:1px;background:#000;"></div>
<div style="left:620px;top:87px;width:1px;height:539px;background:#000;"></div>
<div style="left:1451px;top:87px;width:1px;height:541px;background:#d4d0c8;"></div>
<div style="left:617px;top:627px;width:836px;height:1px;background:#fff;"></div>
<svg style="left:0;top:0" width="1461" height="633" viewBox="0 0 1461 633"><line x1="698.5" y1="102" x2="698.5" y2="565" stroke="#808080" stroke-dasharray="3 3"/><line x1="715.5" y1="102" x2="715.5" y2="565" stroke="#808080" stroke-dasharray="3 3"/><line x1="727.5" y1="102" x2="727.5" y2="565" stroke="#808080" stroke-dasharray="3 3"/><line x1="736.5" y1="102" x2="736.5" y2="565" stroke="#808080" stroke-dasharray="3 3"/><line x1="743.5" y1="102" x2="743.5" y2="565" stroke="#808080" stroke-dasharray="3 3"/><line x1="750.5" y1="102" x2="750.5" y2="565" stroke="#808080" stroke-dasharray="3 3"/><line x1="755.5" y1="102" x2="755.5" y2="565" stroke="#808080" stroke-dasharray="3 3"/><line x1="760.5" y1="102" x2="760.5" y2="565" stroke="#808080" stroke-dasharray="3 3"/><line x1="764.5" y1="102" x2="764.5" y2="565" stroke="#808080" stroke-dasharray="3 3"/><line x1="792.5" y1="102" x2="792.5" y2="565" stroke="#808080" stroke-dasharray="3 3"/><line x1="809.5" y1="102" x2="809.5" y2="565" stroke="#808080" stroke-dasharray="3 3"/><line x1="821.5" y1="102" x2="821.5" y2="565" stroke="#808080" stroke-dasharray="3 3"/><line x1="830.5" y1="102" x2="830.5" y2="565" stroke="#808080" stroke-dasharray="3 3"/><line x1="837.5" y1="102" x2="837.5" y2="565" stroke="#808080" stroke-dasharray="3 3"/><line x1="844.5" y1="102" x2="844.5" y2="565" stroke="#808080" stroke-dasharray="3 3"/><line x1="849.5" y1="102" x2="849.5" y2="565" stroke="#808080" stroke-dasharray="3 3"/><line x1="854.5" y1="102" x2="854.5" y2="565" stroke="#808080" stroke-dasharray="3 3"/><line x1="858.5" y1="102" x2="858.5" y2="565" stroke="#808080" stroke-dasharray="3 3"/><line x1="887.5" y1="102" x2="887.5" y2="565" stroke="#808080" stroke-dasharray="3 3"/><line x1="903.5" y1="102" x2="903.5" y2="565" stroke="#808080" stroke-dasharray="3 3"/><line x1="915.5" y1="102" x2="915.5" y2="565" stroke="#808080" stroke-dasharray="3 3"/><line x1="924.5" y1="102" x2="924.5" y2="565" stroke="#808080" stroke-dasharray="3 3"/><line x1="931.5" y1="102" x2="931.5" y2="565" stroke="#808080" stroke-dasharray="3 3"/><line x1="938.5" y1="102" x2="938.5" y2="565" stroke="#808080" stroke-dasharray="3 3"/><line x1="943.5" y1="102" x2="943.5" y2="565" stroke="#808080" stroke-dasharray="3 3"/><line x1="948.5" y1="102" x2="948.5" y2="565" stroke="#808080" stroke-dasharray="3 3"/><line x1="952.5" y1="102" x2="952.5" y2="565" stroke="#808080" stroke-dasharray="3 3"/><line x1="981.5" y1="102" x2="981.5" y2="565" stroke="#808080" stroke-dasharray="3 3"/><line x1="997.5" y1="102" x2="997.5" y2="565" stroke="#808080" stroke-dasharray="3 3"/><line x1="1009.5" y1="102" x2="1009.5" y2="565" stroke="#808080" stroke-dasharray="3 3"/><line x1="1018.5" y1="102" x2="1018.5" y2="565" stroke="#808080" stroke-dasharray="3 3"/><line x1="1026.5" y1="102" x2="1026.5" y2="565" stroke="#808080" stroke-dasharray="3 3"/><line x1="1032.5" y1="102" x2="1032.5" y2="565" stroke="#808080" stroke-dasharray="3 3"/><line x1="1037.5" y1="102" x2="1037.5" y2="565" stroke="#808080" stroke-dasharray="3 3"/><line x1="1042.5" y1="102" x2="1042.5" y2="565" stroke="#808080" stroke-dasharray="3 3"/><line x1="1047.5" y1="102" x2="1047.5" y2="565" stroke="#808080" stroke-dasharray="3 3"/><line x1="1075.5" y1="102" x2="1075.5" y2="565" stroke="#808080" stroke-dasharray="3 3"/><line x1="1091.5" y1="102" x2="1091.5" y2="565" stroke="#808080" stroke-dasharray="3 3"/><line x1="1103.5" y1="102" x2="1103.5" y2="565" stroke="#808080" stroke-dasharray="3 3"/><line x1="1112.5" y1="102" x2="1112.5" y2="565" stroke="#808080" stroke-dasharray="3 3"/><line x1="1120.5" y1="102" x2="1120.5" y2="565" stroke="#808080" stroke-dasharray="3 3"/><line x1="1126.5" y1="102" x2="1126.5" y2="565" stroke="#808080" stroke-dasharray="3 3"/><line x1="1132.5" y1="102" x2="1132.5" y2="565" stroke="#808080" stroke-dasharray="3 3"/><line x1="1136.5" y1="102" x2="1136.5" y2="565" stroke="#808080" stroke-dasharray="3 3"/><line x1="1141.5" y1="102" x2="1141.5" y2="565" stroke="#808080" stroke-dasharray="3 3"/><line x1="1169.5" y1="102" x2="1169.5" y2="565" stroke="#808080" stroke-dasharray="3 3"/><line x1="1186.5" y1="102" x2="1186.5" y2="565" stroke="#808080" stroke-dasharray="3 3"/><line x1="1197.5" y1="102" x2="1197.5" y2="565" stroke="#808080" stroke-dasharray="3 3"/><line x1="1206.5" y1="102" x2="1206.5" y2="565" stroke="#808080" stroke-dasharray="3 3"/><line x1="1214.5" y1="102" x2="1214.5" y2="565" stroke="#808080" stroke-dasharray="3 3"/><line x1="1220.5" y1="102" x2="1220.5" y2="565" stroke="#808080" stroke-dasharray="3 3"/><line x1="1226.5" y1="102" x2="1226.5" y2="565" stroke="#808080" stroke-dasharray="3 3"/><line x1="1230.5" y1="102" x2="1230.5" y2="565" stroke="#808080" stroke-dasharray="3 3"/><line x1="1235.5" y1="102" x2="1235.5" y2="565" stroke="#808080" stroke-dasharray="3 3"/><line x1="1263.5" y1="102" x2="1263.5" y2="565" stroke="#808080" stroke-dasharray="3 3"/><line x1="1280.5" y1="102" x2="1280.5" y2="565" stroke="#808080" stroke-dasharray="3 3"/><line x1="1291.5" y1="102" x2="1291.5" y2="565" stroke="#808080" stroke-dasharray="3 3"/><line x1="1301.5" y1="102" x2="1301.5" y2="565" stroke="#808080" stroke-dasharray="3 3"/><line x1="1308.5" y1="102" x2="1308.5" y2="565" stroke="#808080" stroke-dasharray="3 3"/><line x1="1314.5" y1="102" x2="1314.5" y2="565" stroke="#808080" stroke-dasharray="3 3"/><line x1="1320.5" y1="102" x2="1320.5" y2="565" stroke="#808080" stroke-dasharray="3 3"/><line x1="1325.5" y1="102" x2="1325.5" y2="565" stroke="#808080" stroke-dasharray="3 3"/><line x1="1329.5" y1="102" x2="1329.5" y2="565" stroke="#808080" stroke-dasharray="3 3"/><line x1="1357.5" y1="102" x2="1357.5" y2="565" stroke="#808080" stroke-dasharray="3 3"/><line x1="1374.5" y1="102" x2="1374.5" y2="565" stroke="#808080" stroke-dasharray="3 3"/><line x1="1386.5" y1="102" x2="1386.5" y2="565" stroke="#808080" stroke-dasharray="3 3"/><line x1="1395.5" y1="102" x2="1395.5" y2="565" stroke="#808080" stroke-dasharray="3 3"/><line x1="1402.5" y1="102" x2="1402.5" y2="565" stroke="#808080" stroke-dasharray="3 3"/><line x1="1408.5" y1="102" x2="1408.5" y2="565" stroke="#808080" stroke-dasharray="3 3"/><line x1="1414.5" y1="102" x2="1414.5" y2="565" stroke="#808080" stroke-dasharray="3 3"/><line x1="1419.5" y1="102" x2="1419.5" y2="565" stroke="#808080" stroke-dasharray="3 3"/><line x1="671" y1="194.5" x2="1423" y2="194.5" stroke="#808080" stroke-dasharray="3 3"/><line x1="671" y1="287.5" x2="1423" y2="287.5" stroke="#808080" stroke-dasharray="3 3"/><line x1="671" y1="379.5" x2="1423" y2="379.5" stroke="#808080" stroke-dasharray="3 3"/><line x1="671" y1="472.5" x2="1423" y2="472.5" stroke="#808080" stroke-dasharray="3 3"/><rect x="670.5" y="101.5" width="753" height="464" fill="none" stroke="#808080"/><path d="M670.5,250.4 C672.45,251.47 678.67,255.03 682.2,256.8 C685.73,258.57 689.02,259.58 691.7,261 C694.38,262.42 694.35,262.68 698.3,265.3 C702.25,267.92 710.58,273.22 715.4,276.7 C720.22,280.18 723.73,283.20 727.2,286.2 C730.67,289.20 733.43,292.10 736.2,294.7 C738.97,297.30 740.67,299.30 743.8,301.8 C746.93,304.30 751.55,307.10 755,309.7 C758.45,312.30 758.25,312.52 764.5,317.4 C770.75,322.28 785.08,333.68 792.5,339 C799.92,344.32 804.25,346.43 809,349.3 C813.75,352.17 817.50,354.22 821,356.2 C824.50,358.18 823.75,357.77 830,361.2 C836.25,364.63 848.92,371.87 858.5,376.8 C868.08,381.73 880.00,387.15 887.5,390.8 C895.00,394.45 898.83,396.38 903.5,398.7 C908.17,401.02 912.00,403.03 915.5,404.7 C919.00,406.37 921.83,407.52 924.5,408.7 C927.17,409.88 926.83,409.92 931.5,411.8 C936.17,413.68 945.75,417.45 952.5,420 C959.25,422.55 966.08,425.73 972,427.1 C977.92,428.47 982.92,428.02 988,428.2 C993.08,428.38 998.92,428.50 1002.5,428.2 C1006.08,427.90 1005.52,427.50 1009.5,426.4 C1013.48,425.30 1020.03,424.18 1026.4,421.6 C1032.77,419.02 1042.93,413.53 1047.7,410.9 C1052.47,408.27 1052.25,407.70 1055,405.8 C1057.75,403.90 1060.78,401.92 1064.2,399.5 C1067.62,397.08 1071.70,394.25 1075.5,391.3 C1079.30,388.35 1084.33,383.98 1087,381.8 C1089.67,379.62 1088.75,380.38 1091.5,378.2 C1094.25,376.02 1100.00,371.47 1103.5,368.7 C1107.00,365.93 1108.65,363.97 1112.5,361.6 C1116.35,359.23 1121.77,357.18 1126.6,354.5 C1131.43,351.82 1134.38,349.45 1141.5,345.5 C1148.62,341.55 1161.82,334.20 1169.3,330.8 C1176.78,327.40 1181.73,326.75 1186.4,325.1 C1191.07,323.45 1193.98,321.85 1197.3,320.9 C1200.62,319.95 1203.45,319.83 1206.3,319.4 C1209.15,318.97 1212.03,318.65 1214.4,318.3 C1216.77,317.95 1216.98,317.63 1220.5,317.3 C1224.02,316.97 1230.58,316.65 1235.5,316.3 C1240.42,315.95 1244.25,315.42 1250,315.2 C1255.75,314.98 1263.77,315.17 1270,315 C1276.23,314.83 1281.60,314.80 1287.4,314.2 C1293.20,313.60 1300.72,312.05 1304.8,311.4 C1308.88,310.75 1307.78,310.65 1311.9,310.3 C1316.02,309.95 1323.98,309.43 1329.5,309.3 C1335.02,309.17 1340.33,309.23 1345,309.5 C1349.67,309.77 1352.58,310.33 1357.5,310.9 C1362.42,311.47 1368.17,312.03 1374.5,312.9 C1380.83,313.77 1389.92,314.92 1395.5,316.1 C1401.08,317.28 1403.33,318.15 1408,320 C1412.67,321.85 1420.92,326.00 1423.5,327.2" fill="none" stroke="#0000ff" stroke-width="1" shape-rendering="crispEdges"/><path d="M670.5,203.5 C713.92,203.58 884.00,203.75 931,204 C978.00,204.25 946.67,204.67 952.5,205 C958.33,205.33 961.25,205.50 966,206 C970.75,206.50 975.75,207.08 981,208 C986.25,208.92 992.75,210.20 997.5,211.5 C1002.25,212.80 1005.92,214.62 1009.5,215.8 C1013.08,216.98 1015.17,217.28 1019,218.6 C1022.83,219.92 1027.75,221.80 1032.5,223.7 C1037.25,225.60 1040.33,227.12 1047.5,230 C1054.67,232.88 1068.17,238.28 1075.5,241 C1082.83,243.72 1086.83,244.97 1091.5,246.3 C1096.17,247.63 1100.00,248.22 1103.5,249 C1107.00,249.78 1106.17,250.30 1112.5,251 C1118.83,251.70 1131.95,252.67 1141.5,253.2 C1151.05,253.73 1153.38,253.98 1169.8,254.2 C1186.22,254.42 1224.35,254.32 1240,254.5 C1255.65,254.68 1253.87,255.05 1263.7,255.3 C1273.53,255.55 1290.32,255.72 1299,256 C1307.68,256.28 1310.68,256.47 1315.8,257 C1320.92,257.53 1325.22,258.48 1329.7,259.2 C1334.18,259.92 1338.03,259.77 1342.7,261.3 C1347.37,262.83 1352.38,265.78 1357.7,268.4 C1363.02,271.02 1369.78,274.45 1374.6,277 C1379.42,279.55 1383.10,281.67 1386.6,283.7 C1390.10,285.73 1392.00,287.40 1395.6,289.2 C1399.20,291.00 1403.58,292.60 1408.2,294.5 C1412.82,296.40 1420.78,299.58 1423.3,300.6" fill="none" stroke="#ff0000" stroke-width="1" shape-rendering="crispEdges"/><path d="M670.5,197.5 C675.17,199.27 691.03,204.97 698.5,208.1 C705.97,211.23 710.48,214.08 715.3,216.3 C720.12,218.52 723.88,219.85 727.4,221.4 C730.92,222.95 731.75,223.37 736.4,225.6 C741.05,227.83 750.62,232.45 755.3,234.8 C759.98,237.15 758.30,236.70 764.5,239.7 C770.70,242.70 785.08,249.35 792.5,252.8 C799.92,256.25 802.75,257.55 809,260.4 C815.25,263.25 821.75,265.70 830,269.9 C838.25,274.10 848.92,280.58 858.5,285.6 C868.08,290.62 880.00,296.42 887.5,300 C895.00,303.58 897.33,304.20 903.5,307.1 C909.67,310.00 916.33,313.45 924.5,317.4 C932.67,321.35 943.00,326.58 952.5,330.8 C962.00,335.02 974.00,339.53 981.5,342.7 C989.00,345.87 990.08,347.03 997.5,349.8 C1004.92,352.57 1016.92,356.07 1026,359.3 C1035.08,362.53 1043.75,366.05 1052,369.2 C1060.25,372.35 1069.67,376.05 1075.5,378.2 C1081.33,380.35 1080.83,380.38 1087,382.1 C1093.17,383.82 1103.42,386.97 1112.5,388.5 C1121.58,390.03 1133.75,390.65 1141.5,391.3 C1149.25,391.95 1142.58,392.15 1159,392.4 C1175.42,392.65 1222.58,392.67 1240,392.8 C1257.42,392.93 1258.33,392.97 1263.5,393.2 C1268.67,393.43 1267.17,393.97 1271,394.2 C1274.83,394.43 1283.00,394.25 1286.5,394.6 C1290.00,394.95 1289.50,395.70 1292,396.3 C1294.50,396.90 1298.75,397.67 1301.5,398.2 C1304.25,398.73 1306.33,399.08 1308.5,399.5 C1310.67,399.92 1312.50,400.05 1314.5,400.7 C1316.50,401.35 1318.00,402.33 1320.5,403.4 C1323.00,404.47 1326.42,405.73 1329.5,407.1 C1332.58,408.47 1335.58,409.88 1339,411.6 C1342.42,413.32 1346.92,415.78 1350,417.4 C1353.08,419.02 1353.42,418.67 1357.5,421.3 C1361.58,423.93 1368.17,428.98 1374.5,433.2 C1380.83,437.42 1388.83,441.87 1395.5,446.6 C1402.17,451.33 1409.83,458.03 1414.5,461.6 C1419.17,465.17 1422.00,466.93 1423.5,468" fill="none" stroke="#008000" stroke-width="1" shape-rendering="crispEdges"/><text x="667.5" y="105.5" font-family="Liberation Sans" font-size="10" letter-spacing="0.45" fill="#0000ff" text-anchor="end">0.000</text><text x="667.5" y="198.5" font-family="Liberation Sans" font-size="10" letter-spacing="0.45" fill="#0000ff" text-anchor="end">-40.000</text><text x="667.5" y="291.5" font-family="Liberation Sans" font-size="10" letter-spacing="0.45" fill="#0000ff" text-anchor="end">-80.000</text><text x="667.5" y="383.5" font-family="Liberation Sans" font-size="10" letter-spacing="0.45" fill="#0000ff" text-anchor="end">-120.000</text><text x="667.5" y="476.5" font-family="Liberation Sans" font-size="10" letter-spacing="0.45" fill="#0000ff" text-anchor="end">-160.000</text><text x="667.5" y="569.5" font-family="Liberation Sans" font-size="10" letter-spacing="0.45" fill="#0000ff" text-anchor="end">-200.000</text><text x="670.5" y="576" font-family="Liberation Sans" font-size="10" letter-spacing="0.45" fill="#0000ff">1</text><text x="764" y="576" font-family="Liberation Sans" font-size="10" letter-spacing="0.45" fill="#0000ff" text-anchor="middle">10</text><text x="858" y="576" font-family="Liberation Sans" font-size="10" letter-spacing="0.45" fill="#0000ff" text-anchor="middle">100</text><text x="953" y="576" font-family="Liberation Sans" font-size="10" letter-spacing="0.45" fill="#0000ff" text-anchor="middle">1K</text><text x="1047.5" y="576" font-family="Liberation Sans" font-size="10" letter-spacing="0.45" fill="#0000ff" text-anchor="middle">10K</text><text x="1141.5" y="576" font-family="Liberation Sans" font-size="10" letter-spacing="0.45" fill="#0000ff" text-anchor="middle">100K</text><text x="1235.5" y="576" font-family="Liberation Sans" font-size="10" letter-spacing="0.45" fill="#0000ff" text-anchor="middle">1M</text><text x="1329.5" y="576" font-family="Liberation Sans" font-size="10" letter-spacing="0.45" fill="#0000ff" text-anchor="middle">10M</text><text x="1423.5" y="576" font-family="Liberation Sans" font-size="10" letter-spacing="0.45" fill="#0000ff" text-anchor="middle">100M</text><text x="670.5" y="589" font-family="Liberation Sans" font-size="10" fill="#0000ff" letter-spacing="0.3">db(v(OUT_1))</text><rect x="671" y="590" width="62" height="1" fill="#0000ff"/><text x="845" y="589" font-family="Liberation Sans" font-size="10" fill="#ff0000" letter-spacing="0.3">db(v(OUT_4))</text><text x="1019" y="589" font-family="Liberation Sans" font-size="10" fill="#008000" letter-spacing="0.3">db(v(OUT_5))</text><text x="983" y="603" font-family="Liberation Sans" font-size="10" letter-spacing="0.45" fill="#0000ff">F (Hz)</text><text x="987" y="98" font-family="Liberation Sans" font-size="10" fill="#0000ff" letter-spacing="0.25">Reg_1.CIR R43=150m...1</text></svg>
<svg style="left:0;top:0" width="1461" height="90" viewBox="0 0 1461 90"><polygon points="629,38 629,49.5 631.6,47 634,51.8 636,50.8 633.8,46.2 637.3,46.2" fill="#000" /><polyline points="649,43.5 655.5,37.2" fill="none" stroke="#000" stroke-width="1.1" /><rect x="657.5" y="37.5" width="6.5" height="6.5" fill="#fff" stroke="#000" stroke-width="1.2" /><polygon points="652.5,45 656,48.5 652.5,52 649,48.5" fill="#fff" stroke="#000" stroke-width="1.1"/><circle cx="661" cy="48.5" r="3.3" fill="#fff" stroke="#000" stroke-width="1.2"/><polygon points="672,44 677,44 674.5,46.8" fill="#000" /><rect x="681" y="34" width="23" height="21" fill="url(#chk)"/><rect x="681" y="34" width="23" height="1" fill="#808080" /><rect x="681" y="34" width="1" height="21" fill="#808080" /><rect x="681" y="54" width="23" height="1" fill="#fff" /><rect x="703" y="34" width="1" height="21" fill="#fff" /><rect x="685.5" y="39.5" width="12" height="10" fill="none" stroke="#000" stroke-width="1" stroke-dasharray="1 1.2"/><path d="M685 50 C689 52 691 47 693 44 C695 41 698 39 701 41.5" fill="none" stroke="#0000ff" stroke-width="1.3"/><path d="M707.5 43 C708.5 37 711.5 37 712.5 40 L715 44.5 C716.5 45.5 717 41 719 40.2 C720.5 40 721.5 42.5 722.8 44.8" fill="none" stroke="#000080" stroke-width="1.3"/><polyline points="710.5,40 710.5,45" fill="none" stroke="#000" stroke-width="1" stroke-dasharray="1 1"/><polyline points="719.5,38 719.5,45" fill="none" stroke="#000" stroke-width="1" stroke-dasharray="1 1"/><rect x="707" y="47" width="16" height="1.1" fill="#000" /><rect x="709" y="49" width="5" height="1.1" fill="#000" /><rect x="716" y="49" width="5" height="1.1" fill="#000" /><rect x="709" y="51" width="5" height="1.1" fill="#000" /><rect x="716" y="51" width="5" height="1.1" fill="#000" /><polyline points="730,38.6 732.5,38.6 732.5,41.2 744.5,41.2 744.5,38.6 746,38.6" fill="none" stroke="#000080" stroke-width="1.3" /><polyline points="732.5,43 732.5,48" fill="none" stroke="#000" stroke-width="1" stroke-dasharray="1 1"/><polyline points="744.5,43 744.5,48" fill="none" stroke="#000" stroke-width="1" stroke-dasharray="1 1"/><rect x="733" y="49" width="4" height="1" fill="#000" /><rect x="741.5" y="49" width="3" height="1" fill="#000" /><rect x="737.5" y="47.5" width="3.5" height="3" fill="none" stroke="#000" stroke-width="1.1" /><polygon points="731.5,49.5 734,47.5 734,51.5" fill="#000" /><polygon points="745.5,49.5 743,47.5 743,51.5" fill="#000" /><rect x="755" y="38" width="1.1" height="4" fill="#000" /><polygon points="753.6,39.5 755.5,37 757.4,39.5" fill="#000" /><polyline points="757,37.5 762,37.5" fill="none" stroke="#000" stroke-width="1" stroke-dasharray="1 1"/><rect x="755" y="48.5" width="1.1" height="3.5" fill="#000" /><polygon points="753.6,50 755.5,52.5 757.4,50" fill="#000" /><polyline points="757,51.5 760,51.5" fill="none" stroke="#000" stroke-width="1" stroke-dasharray="1 1"/><rect x="753" y="43" width="1.2" height="4" fill="#000" /><rect x="755.6" y="43.5" width="2.4" height="3" fill="none" stroke="#000" stroke-width="1.1" /><path d="M761 52 C762 49 762.5 45 763.5 42.5 C764.5 39.5 765.5 38 766.5 38 C767.5 38 768 39 768.5 40" fill="none" stroke="#000080" stroke-width="1.3"/><rect x="785" y="37" width="1.2" height="4.2" fill="#000" /><rect x="784.2" y="37.6" width="1" height="1" fill="#000" /><rect x="787" y="40" width="1.2" height="1.2" fill="#000" /><rect x="789.3" y="37.5" width="2.2" height="3.3" fill="none" stroke="#000" stroke-width="1.1" /><polyline points="791.8,42.4 786,42.4 781.5,47" fill="none" stroke="#000" stroke-width="1.1" /><polygon points="780,48.5 780.5,44.8 783.6,47.2" fill="#000" /><polyline points="776,48.6 780.8,48.6 780.8,51.4 786,51.4 786,48.6 792,48.6" fill="none" stroke="#000080" stroke-width="1.2" /><text x="802" y="41.6" font-family="Liberation Sans" font-size="6.2" font-weight="bold" fill="#a00000" textLength="10.5" lengthAdjust="spacingAndGlyphs">F( )</text><path d="M800.5 51.5 C802 47 806 45 807 45.5 C809 45.5 812 47.5 813.5 51.5" fill="none" stroke="#000080" stroke-width="1.2"/><rect x="800" y="41" width="1.2" height="4" fill="#000" /><polygon points="798.6,44.5 802.6,44.5 800.6,47.2" fill="#000" /><rect x="813" y="41" width="1.2" height="4" fill="#000" /><polygon points="811.6,44.5 815.6,44.5 813.6,47.2" fill="#000" /><polyline points="800.5,47.5 800.5,52" fill="none" stroke="#000" stroke-width="1" stroke-dasharray="1 1"/><polyline points="813.5,47.5 813.5,52" fill="none" stroke="#000" stroke-width="1" stroke-dasharray="1 1"/><rect x="823" y="38" width="15" height="2.6" fill="#000" /><rect x="823" y="38" width="1.8" height="3.6" fill="#000" /><rect x="836.2" y="38" width="1.8" height="3.6" fill="#000" /><rect x="828.6" y="38" width="3.4" height="12" fill="#000" /><rect x="826.8" y="49" width="7" height="2.2" fill="#000" /><rect x="844" y="35" width="1" height="19" fill="#808080" /><rect x="845" y="35" width="1" height="19" fill="#fff" /><rect x="855" y="37.5" width="7" height="5" fill="url(#chkg)" /><polyline points="851.5,43 856,38.5 860,42.5" fill="none" stroke="#000" stroke-width="1.1" /><polyline points="856,38 863,38" fill="none" stroke="#000" stroke-width="1" /><rect x="850.8" y="41.8" width="11.4" height="9.6" fill="#fff" stroke="#000" stroke-width="1.6" /><rect x="853" y="44" width="2" height="1" fill="#000" /><rect x="853" y="46.5" width="2" height="1" fill="#000" /><rect x="856" y="46.5" width="5" height="1" fill="#000" /><rect x="853" y="48.8" width="2" height="1" fill="#000" /><rect x="856" y="48.8" width="5" height="1" fill="#000" /><polyline points="852.5,44.5 854,45.5 856.5,42.5" fill="none" stroke="#000" stroke-width="1" /><polygon points="862.5,38 865.5,37 865.5,43.5 862.5,41" fill="#000080" /><rect x="873" y="35" width="1" height="19" fill="#808080" /><rect x="874" y="35" width="1" height="19" fill="#fff" /><polygon points="879,37.5 892.5,45 879,52.5" fill="#000" /><rect x="904" y="39" width="13" height="13" fill="#fff" /><rect x="903" y="38" width="13" height="13" fill="#808080" /><rect x="928" y="39" width="4" height="13" fill="#fff" /><rect x="927" y="38" width="4" height="13" fill="#808080" /><rect x="935" y="39" width="4" height="13" fill="#fff" /><rect x="934" y="38" width="4" height="13" fill="#808080" /><rect x="947" y="35" width="1" height="19" fill="#808080" /><rect x="948" y="35" width="1" height="19" fill="#fff" /><polyline points="952,52 961,42 963,40 968,40" fill="none" stroke="#000" stroke-width="1.1" /><circle cx="956.5" cy="47" r="1.2" fill="#000" stroke="none" stroke-width="1"/><circle cx="961" cy="42" r="1.2" fill="#000" stroke="none" stroke-width="1"/><polyline points="976,50.5 989,38.5" fill="none" stroke="#000" stroke-width="1.1" /><rect x="975.5" y="49.5" width="2.5" height="2.5" fill="#fff" stroke="#000" stroke-width="1" /><rect x="981.5" y="43.5" width="2.5" height="2.5" fill="#fff" stroke="#000" stroke-width="1" /><rect x="987.5" y="37.5" width="2.5" height="2.5" fill="#fff" stroke="#000" stroke-width="1" /><rect x="998" y="35" width="1" height="19" fill="#808080" /><rect x="999" y="35" width="1" height="19" fill="#fff" /><rect x="1003" y="37" width="16" height="2" fill="#000" /><rect x="1003" y="50" width="16" height="2" fill="#000" /><rect x="1003" y="37" width="2" height="15" fill="#000" /><rect x="1017" y="37" width="2" height="15" fill="#000" /><rect x="1006" y="39" width="1" height="2" fill="#000" /><rect x="1006" y="48" width="1" height="2" fill="#000" /><rect x="1008" y="39" width="1" height="2" fill="#000" /><rect x="1008" y="48" width="1" height="2" fill="#000" /><rect x="1010" y="39" width="1" height="2" fill="#000" /><rect x="1010" y="48" width="1" height="2" fill="#000" /><rect x="1012" y="39" width="1" height="2" fill="#000" /><rect x="1012" y="48" width="1" height="2" fill="#000" /><rect x="1014" y="39" width="1" height="2" fill="#000" /><rect x="1014" y="48" width="1" height="2" fill="#000" /><rect x="1016" y="39" width="1" height="2" fill="#000" /><rect x="1016" y="48" width="1" height="2" fill="#000" /><rect x="1005" y="41" width="2" height="1" fill="#000" /><rect x="1015" y="41" width="2" height="1" fill="#000" /><rect x="1005" y="43" width="2" height="1" fill="#000" /><rect x="1015" y="43" width="2" height="1" fill="#000" /><rect x="1005" y="45" width="2" height="1" fill="#000" /><rect x="1015" y="45" width="2" height="1" fill="#000" /><rect x="1005" y="47" width="2" height="1" fill="#000" /><rect x="1015" y="47" width="2" height="1" fill="#000" /><rect x="1026" y="37" width="16" height="2" fill="#000" /><rect x="1026" y="50" width="16" height="2" fill="#000" /><rect x="1026" y="37" width="2" height="15" fill="#000" /><rect x="1040" y="37" width="2" height="15" fill="#000" /><rect x="1031" y="39" width="1" height="1" fill="#000" /><rect x="1031" y="49" width="1" height="1" fill="#000" /><rect x="1030" y="42" width="3" height="1" fill="#000" /><rect x="1031" y="41" width="1" height="3" fill="#000" /><rect x="1030" y="46" width="3" height="1" fill="#000" /><rect x="1031" y="45" width="1" height="3" fill="#000" /><rect x="1036" y="39" width="1" height="1" fill="#000" /><rect x="1036" y="49" width="1" height="1" fill="#000" /><rect x="1035" y="42" width="3" height="1" fill="#000" /><rect x="1036" y="41" width="1" height="3" fill="#000" /><rect x="1035" y="46" width="3" height="1" fill="#000" /><rect x="1036" y="45" width="1" height="3" fill="#000" /><rect x="1028" y="42" width="1" height="1" fill="#000" /><rect x="1039" y="42" width="1" height="1" fill="#000" /><rect x="1028" y="46" width="1" height="1" fill="#000" /><rect x="1039" y="46" width="1" height="1" fill="#000" /><rect x="1049" y="35" width="1" height="19" fill="#808080" /><rect x="1050" y="35" width="1" height="19" fill="#fff" /><rect x="1051" y="34" width="22" height="21" fill="url(#chk)"/><rect x="1051" y="34" width="22" height="1" fill="#808080" /><rect x="1051" y="34" width="1" height="21" fill="#808080" /><rect x="1051" y="54" width="22" height="1" fill="#fff" /><rect x="1072" y="34" width="1" height="21" fill="#fff" /><rect x="1055.5" y="38.5" width="13" height="13" fill="none" stroke="#000" stroke-width="1.5" /><rect x="1057" y="40" width="1" height="11" fill="#000" /><rect x="1059" y="40" width="1" height="11" fill="#000" /><rect x="1061" y="40" width="1" height="11" fill="#000" /><rect x="1063" y="40" width="1" height="11" fill="#000" /><rect x="1065" y="40" width="1" height="11" fill="#000" /><rect x="1067" y="40" width="1" height="11" fill="#000" /><rect x="1074" y="34" width="22" height="21" fill="url(#chk)"/><rect x="1074" y="34" width="22" height="1" fill="#808080" /><rect x="1074" y="34" width="1" height="21" fill="#808080" /><rect x="1074" y="54" width="22" height="1" fill="#fff" /><rect x="1095" y="34" width="1" height="21" fill="#fff" /><rect x="1078.5" y="38.5" width="13" height="13" fill="none" stroke="#000" stroke-width="1.5" /><rect x="1080" y="40" width="11" height="1" fill="#000" /><rect x="1080" y="42" width="11" height="1" fill="#000" /><rect x="1080" y="44" width="11" height="1" fill="#000" /><rect x="1080" y="46" width="11" height="1" fill="#000" /><rect x="1080" y="48" width="11" height="1" fill="#000" /><rect x="1080" y="50" width="11" height="1" fill="#000" /><rect x="1097" y="34" width="22" height="21" fill="url(#chk)"/><rect x="1097" y="34" width="22" height="1" fill="#808080" /><rect x="1097" y="34" width="1" height="21" fill="#808080" /><rect x="1097" y="54" width="22" height="1" fill="#fff" /><rect x="1118" y="34" width="1" height="21" fill="#fff" /><rect x="1101.5" y="38.5" width="13" height="13" fill="none" stroke="#000" stroke-width="1.5" /><rect x="1105.0" y="40.5" width="1" height="1" fill="#000" /><rect x="1105.0" y="42.7" width="1" height="1" fill="#000" /><rect x="1105.0" y="44.9" width="1" height="1" fill="#000" /><rect x="1105.0" y="47.1" width="1" height="1" fill="#000" /><rect x="1105.0" y="49.3" width="1" height="1" fill="#000" /><rect x="1107.3" y="40.5" width="1" height="1" fill="#000" /><rect x="1107.3" y="42.7" width="1" height="1" fill="#000" /><rect x="1107.3" y="44.9" width="1" height="1" fill="#000" /><rect x="1107.3" y="47.1" width="1" height="1" fill="#000" /><rect x="1107.3" y="49.3" width="1" height="1" fill="#000" /><rect x="1109.6" y="40.5" width="1" height="1" fill="#000" /><rect x="1109.6" y="42.7" width="1" height="1" fill="#000" /><rect x="1109.6" y="44.9" width="1" height="1" fill="#000" /><rect x="1109.6" y="47.1" width="1" height="1" fill="#000" /><rect x="1109.6" y="49.3" width="1" height="1" fill="#000" /><rect x="1111.9" y="40.5" width="1" height="1" fill="#000" /><rect x="1111.9" y="42.7" width="1" height="1" fill="#000" /><rect x="1111.9" y="44.9" width="1" height="1" fill="#000" /><rect x="1111.9" y="47.1" width="1" height="1" fill="#000" /><rect x="1111.9" y="49.3" width="1" height="1" fill="#000" /><rect x="1123.5" y="38" width="14.5" height="13.5" fill="none" stroke="#000" stroke-width="1.5" /><polyline points="1128.5,39 1128.5,51" fill="none" stroke="#000" stroke-width="1" stroke-dasharray="1 1"/><polyline points="1133.5,39 1133.5,51" fill="none" stroke="#000" stroke-width="1" stroke-dasharray="1 1"/><rect x="1146" y="35" width="1" height="19" fill="#808080" /><rect x="1147" y="35" width="1" height="19" fill="#fff" /><rect x="1151.5" y="38" width="15" height="13.5" fill="none" stroke="#000" stroke-width="1.5" /><rect x="1152" y="47" width="14.5" height="1.3" fill="#000" /><polyline points="1174,49 1179,46.5 1184,43 1190,40.5" fill="none" stroke="#0000ff" stroke-width="1.3" /><polyline points="1178.5,37 1178.5,52" fill="none" stroke="#000" stroke-width="1" stroke-dasharray="1.2 1.8"/><polyline points="1175,45.5 1190,45.5" fill="none" stroke="#000" stroke-width="1" stroke-dasharray="1.2 1.8"/><rect x="1197" y="35" width="1" height="19" fill="#808080" /><rect x="1198" y="35" width="1" height="19" fill="#fff" /><path d="M1204 52 C1208 49 1209 44 1211 41 C1212 39 1214 38 1217 38" fill="none" stroke="#0000ff" stroke-width="1.3"/><rect x="1203" y="43.5" width="5" height="1.3" fill="#000" /><polygon points="1206.5,41 1210,44 1206.5,47" fill="#000" /><polyline points="1211,37 1211,52" fill="none" stroke="#000" stroke-width="1" stroke-dasharray="1 1"/><polyline points="1225,51 1232,50 1235,48 1240,45.5" fill="none" stroke="#0000ff" stroke-width="1.3" /><rect x="1231" y="38" width="1.3" height="9" fill="#000" /><polygon points="1228.5,44 1231.6,48 1234.7,44" fill="#000" /><polyline points="1231.5,48 1231.5,52" fill="none" stroke="#000" stroke-width="1" stroke-dasharray="1 1"/><polyline points="1248,51 1256,50 1260,48 1264,45" fill="none" stroke="#0000ff" stroke-width="1.3" /><polyline points="1256.5,37 1256.5,52" fill="none" stroke="#000" stroke-width="1" stroke-dasharray="1 1"/><polyline points="1260.5,37 1260.5,52" fill="none" stroke="#000" stroke-width="1" stroke-dasharray="1 1"/><rect x="1255.8" y="39" width="1.4" height="6" fill="#000" /><polygon points="1254,44 1256.5,48 1259,44" fill="#000" /><rect x="1259.8" y="38" width="1.4" height="5" fill="#000" /><polygon points="1258,42 1260.5,46 1263,42" fill="#000" /><path d="M1271 38.5 H1276 C1279 38.5 1280 43 1283 44 H1287" fill="none" stroke="#000" stroke-width="1.3"/><path d="M1271 41 H1275 C1278 41 1279 46 1282 47 H1287" fill="none" stroke="#ff0000" stroke-width="1.3"/><path d="M1271 43.5 H1274 C1277 43.5 1278 49 1281 50 H1287" fill="none" stroke="#000" stroke-width="1.3"/><rect x="1293" y="35" width="1" height="19" fill="#808080" /><rect x="1294" y="35" width="1" height="19" fill="#fff" /><rect x="1299.5" y="38.5" width="15" height="12.5" fill="#fff" stroke="#0000a0" stroke-width="1.4" /><polyline points="1301,43 1304,40.5 1307,42.5 1310,40.5 1313.5,42" fill="none" stroke="#0000ff" stroke-width="1" /><polyline points="1301,48.5 1307,48.5 1310,46 1313.5,44.5" fill="none" stroke="#ff0000" stroke-width="1.2" /><polygon points="1303,47.5 1309,40.5 1312,42.5 1306,49.5" fill="#000" /><polygon points="1304.5,47 1309.3,41.6 1310.5,42.5 1305.6,48" fill="#fff" /><rect x="1322" y="35" width="1" height="19" fill="#808080" /><rect x="1323" y="35" width="1" height="19" fill="#fff" /><rect x="622" y="60" width="23" height="21" fill="url(#chk)"/><rect x="622" y="60" width="23" height="1" fill="#808080" /><rect x="622" y="60" width="1" height="21" fill="#808080" /><rect x="622" y="80" width="23" height="1" fill="#fff" /><rect x="644" y="60" width="1" height="21" fill="#fff" /><polyline points="633.5,63 633.5,79" fill="none" stroke="#000" stroke-width="1" stroke-dasharray="1 1"/><rect x="626" y="70.6" width="16" height="1.5" fill="#0000ff" /><ellipse cx="628.8" cy="71.3" rx="2.3" ry="2" fill="#0000ff"/><ellipse cx="633.5" cy="71.3" rx="2.3" ry="2" fill="#0000ff"/><ellipse cx="638.3" cy="71.3" rx="2.3" ry="2" fill="#0000ff"/><polyline points="655.5,63 655.5,79" fill="none" stroke="#000" stroke-width="1" stroke-dasharray="1 1"/><rect x="648" y="70.6" width="16" height="1.5" fill="#0000ff" /><ellipse cx="650.5" cy="71.3" rx="2.3" ry="2" fill="#0000ff"/><ellipse cx="660.5" cy="71.3" rx="2.3" ry="2" fill="#0000ff"/><polyline points="679.5,63 679.5,78" fill="none" stroke="#000" stroke-width="1" stroke-dasharray="1 1"/><path d="M671 77 C674 72 675 64 678.5 63.5 C682 64 683 72 686.5 77" fill="none" stroke="#0000ff" stroke-width="1.3"/><polyline points="702.5,63 702.5,78" fill="none" stroke="#000" stroke-width="1" stroke-dasharray="1 1"/><path d="M694 63.5 C697 69 698 77 701.5 77.5 C705 77 706 69 709.5 63.5" fill="none" stroke="#0000ff" stroke-width="1.3"/><polyline points="728.5,63 728.5,78" fill="none" stroke="#000" stroke-width="1" stroke-dasharray="1 1"/><path d="M717.3 73.8 C718.5 71.8 720 72 721 74.5 C722 76.5 723.5 76.5 724.5 74 L727.3 67.2 C727.8 66 729.2 66 729.7 67.2 L732.6 74.2" fill="none" stroke="#0000ff" stroke-width="1.4"/><polyline points="751.5,63 751.5,78" fill="none" stroke="#000" stroke-width="1" stroke-dasharray="1 1"/><path d="M740.4 67.2 C741.5 64.8 743.5 64.5 745 65.8 L750.5 74.2 C751 75 752 75 752.5 74.2 L755.6 66.5" fill="none" stroke="#0000ff" stroke-width="1.4"/><polyline points="770.5,63 770.5,78" fill="none" stroke="#000" stroke-width="1" stroke-dasharray="1 1"/><polyline points="763.5,77.3 778.7,63.3" fill="none" stroke="#0000ff" stroke-width="1.3" /><polyline points="793.5,63 793.5,78" fill="none" stroke="#000" stroke-width="1" stroke-dasharray="1 1"/><path d="M786.5 74.5 L791.5 65.8 Q793 63.8 794.5 65.8 L800.8 76.5 M790.5 76.5 L795.5 67.2 Q797 65.2 799 66.6 L801.5 68.8" fill="none" stroke="#0000ff" stroke-width="1.4"/><polyline points="816.5,63 816.5,78" fill="none" stroke="#000" stroke-width="1" stroke-dasharray="1 1"/><path d="M809.5 66 L814.5 75.3 Q815.8 77.2 817.2 75.3 L823.8 64.5 M813.5 64.5 L818.5 72.5 Q820 74.6 821.8 73.6 L825 71.8" fill="none" stroke="#0000ff" stroke-width="1.4"/><polyline points="840.5,63 840.5,78" fill="none" stroke="#000" stroke-width="1" stroke-dasharray="1 1"/><path d="M832 65 Q840 73 848 65 M832 69 Q840 77 848 69 M832 73 Q840 79 848 73" fill="none" stroke="#0000ff" stroke-width="1.3"/><circle cx="840.5" cy="76" r="2.4" fill="#0000ff" stroke="none" stroke-width="1"/><polyline points="863.5,63 863.5,78" fill="none" stroke="#000" stroke-width="1" stroke-dasharray="1 1"/><path d="M855 69 Q863 61 871 69 M855 73 Q863 65 871 73 M855 77 Q863 69 871 77" fill="none" stroke="#0000ff" stroke-width="1.3"/><circle cx="863.5" cy="65.8" r="2.4" fill="#0000ff" stroke="none" stroke-width="1"/><rect x="878" y="62" width="1" height="17" fill="#808080" /><rect x="879" y="62" width="1" height="17" fill="#fff" /><polygon points="885,64.5 888,63.5 891,68.5 885,68.5" fill="#0000ff" /><rect x="885" y="64" width="6" height="4.5" fill="url(#chkw)" /><polygon points="890,63.5 894.5,62.8 895.5,69 891,69" fill="#fff" stroke="#000" stroke-width=".6"/><rect x="892" y="64" width="2" height="4" fill="#ff0000" /><polygon points="884,69 895,69 899,66.5 899,75.5 895,78 884,78" fill="#ffff00" stroke="#000" stroke-width="1.2"/><rect x="884.5" y="69.5" width="14" height="8" fill="url(#chky)" /><polyline points="895,69 895,78" fill="none" stroke="#000" stroke-width="1" /><polyline points="895,69 899,66.5" fill="none" stroke="#000" stroke-width="1" /><circle cx="889.5" cy="72.3" r="1.7" fill="#000" stroke="none" stroke-width="1"/><rect x="889" y="72.5" width="1.2" height="3.2" fill="#000" /><polygon points="907,70 912,70 909.5,72.8" fill="#000" /><rect x="919" y="62" width="1" height="17" fill="#808080" /><rect x="920" y="62" width="1" height="17" fill="#fff" /><rect x="924" y="63" width="16" height="15" fill="#000" /><rect x="926" y="65" width="12" height="11" fill="#fff" /><rect x="926" y="65" width="4" height="1" fill="#000" /><rect x="931" y="65" width="3" height="1" fill="#000" /><rect x="935" y="65" width="3" height="1" fill="#000" /><rect x="926" y="67" width="4" height="1" fill="#000" /><rect x="931" y="67" width="3" height="1" fill="#000" /><rect x="935" y="67" width="3" height="1" fill="#000" /><rect x="926" y="69" width="4" height="1" fill="#000" /><rect x="931" y="69" width="3" height="1" fill="#000" /><rect x="935" y="69" width="3" height="1" fill="#000" /><rect x="926" y="71" width="4" height="1" fill="#000" /><rect x="931" y="71" width="3" height="1" fill="#000" /><rect x="935" y="71" width="3" height="1" fill="#000" /><rect x="926" y="73" width="4" height="1" fill="#000" /><rect x="931" y="73" width="3" height="1" fill="#000" /><rect x="935" y="73" width="3" height="1" fill="#000" /><rect x="926" y="75" width="4" height="1" fill="#000" /><rect x="931" y="75" width="3" height="1" fill="#000" /><rect x="935" y="75" width="3" height="1" fill="#000" /><rect x="946" y="62" width="1" height="17" fill="#808080" /><rect x="947" y="62" width="1" height="17" fill="#fff" /><text x="951.5" y="78" font-family="Liberation Sans" font-size="17.5" font-weight="bold" fill="#000" textLength="17" lengthAdjust="spacingAndGlyphs">'P'</text><rect x="974" y="62" width="1" height="17" fill="#808080" /><rect x="975" y="62" width="1" height="17" fill="#fff" /><rect x="977" y="60" width="23" height="21" fill="url(#chk)"/><rect x="977" y="60" width="23" height="1" fill="#808080" /><rect x="977" y="60" width="1" height="21" fill="#808080" /><rect x="977" y="80" width="23" height="1" fill="#fff" /><rect x="999" y="60" width="1" height="21" fill="#fff" /><text x="981" y="69" font-family="Liberation Sans" font-size="8.5" font-weight="bold" fill="#a00000" >X</text><rect x="989" y="67" width="1.6" height="10" fill="#000" /><polygon points="986,78 989.8,74 993.5,78" fill="#000" /><polyline points="983,72 989.8,68.5 996.5,72" fill="none" stroke="#000" stroke-width="1" /><path d="M982 72.5 Q984 75 986 72.5 Z" fill="#ffff00" stroke="#000" stroke-width=".6"/><path d="M993.5 72.5 Q995.5 75 997.5 72.5 Z" fill="#ffff00" stroke="#000" stroke-width=".6"/><rect x="1000" y="60" width="23" height="21" fill="url(#chk)"/><rect x="1000" y="60" width="23" height="1" fill="#808080" /><rect x="1000" y="60" width="1" height="21" fill="#808080" /><rect x="1000" y="80" width="23" height="1" fill="#fff" /><rect x="1022" y="60" width="1" height="21" fill="#fff" /><text x="1004" y="69" font-family="Liberation Sans" font-size="8.5" font-weight="bold" fill="#a00000" >Y</text><rect x="1012" y="67" width="1.6" height="10" fill="#000" /><polygon points="1009,78 1012.8,74 1016.5,78" fill="#000" /><polyline points="1006,72 1012.8,68.5 1019.5,72" fill="none" stroke="#000" stroke-width="1" /><path d="M1005 72.5 Q1007 75 1009 72.5 Z" fill="#ffff00" stroke="#000" stroke-width=".6"/><path d="M1016.5 72.5 Q1018.5 75 1020.5 72.5 Z" fill="#ffff00" stroke="#000" stroke-width=".6"/><rect x="1025" y="62" width="1" height="17" fill="#808080" /><rect x="1026" y="62" width="1" height="17" fill="#fff" /><polygon points="1043.73,71.37 1040.37,74.73 1035.63,74.73 1032.27,71.37 1032.27,66.63 1035.63,63.27 1040.37,63.27 1043.73,66.63" fill="none" stroke="#000" stroke-width="1.3"/><polyline points="1042,73 1046.6,77.6" fill="none" stroke="#000" stroke-width="2.6" /><polyline points="1033.6,67.2 1036.2,64.6" fill="none" stroke="#00e0e0" stroke-width="1" /><polyline points="1039.8,73.4 1042.4,70.8" fill="none" stroke="#00e0e0" stroke-width="1" /><rect x="1035" y="68" width="6" height="2" fill="#000" /><rect x="1037" y="66" width="2" height="6" fill="#000" /><polygon points="1066.73,71.37 1063.37,74.73 1058.63,74.73 1055.27,71.37 1055.27,66.63 1058.63,63.27 1063.37,63.27 1066.73,66.63" fill="none" stroke="#000" stroke-width="1.3"/><polyline points="1065,73 1069.6,77.6" fill="none" stroke="#000" stroke-width="2.6" /><polyline points="1056.6,67.2 1059.2,64.6" fill="none" stroke="#00e0e0" stroke-width="1" /><polyline points="1062.8,73.4 1065.4,70.8" fill="none" stroke="#00e0e0" stroke-width="1" /><rect x="1058" y="68" width="6" height="2" fill="#000" /><polygon points="1089.73,71.37 1086.37,74.73 1081.63,74.73 1078.27,71.37 1078.27,66.63 1081.63,63.27 1086.37,63.27 1089.73,66.63" fill="none" stroke="#000" stroke-width="1.3"/><polyline points="1088,73 1092.6,77.6" fill="none" stroke="#000" stroke-width="2.6" /><polyline points="1079.6,67.2 1082.2,64.6" fill="none" stroke="#00e0e0" stroke-width="1" /><polyline points="1085.8,73.4 1088.4,70.8" fill="none" stroke="#00e0e0" stroke-width="1" /><rect x="1079.6" y="66.6" width="8.8" height="5" fill="#fff" stroke="#0000a0" stroke-width="1.2" /><polyline points="1080.8,70 1082.5,68 1084,70 1085.5,68 1087,70" fill="none" stroke="#ff0000" stroke-width="1" /><rect x="1099" y="62" width="1" height="17" fill="#808080" /><rect x="1100" y="62" width="1" height="17" fill="#fff" /><circle cx="1113.5" cy="71" r="7" fill="#fff" stroke="none" stroke-width="1"/><circle cx="1112.8" cy="70.3" r="7" fill="#a0a0a0" stroke="none" stroke-width="1"/><circle cx="1112.8" cy="70.3" r="7" fill="url(#chkg)" stroke="none" stroke-width="1"/><polyline points="1106.5,67 1119,67" fill="none" stroke="#fff" stroke-width="0.8" /><polyline points="1112,63.5 1112,77" fill="none" stroke="#fff" stroke-width="0.8" /><text x="1128.3" y="77.6" font-family="Liberation Serif" font-size="21" font-weight="bold" fill="#000" textLength="14" lengthAdjust="spacingAndGlyphs">F</text></svg>
<svg style="left:0;top:0" width="1461" height="633" viewBox="0 0 1461 633"><rect x="621" y="11" width="16" height="16" fill="#000" /><rect x="622" y="12" width="14" height="2.5" fill="#0000ff" /><rect x="622" y="15" width="14" height="11" fill="#fff" /><rect x="624" y="16.5" width="10" height="0.8" fill="#808080" /><rect x="623" y="18.5" width="1" height="1" fill="#808080" /><rect x="623" y="20.5" width="1" height="1" fill="#808080" /><rect x="623" y="22.5" width="1" height="1" fill="#808080" /><rect x="625" y="18" width="10" height="7" fill="#000" /><rect x="626" y="19" width="8" height="5" fill="#00ffff" /><polyline points="626,22.5 628,20.5 631,20.5 634,22.5" fill="none" stroke="#000" stroke-width="1" /><text x="638.6" y="23" font-family="Liberation Sans" font-size="11" font-weight="bold" fill="#fff" >AC Analysis</text><rect x="1400" y="12" width="16" height="14" fill="#d4d0c8" /><rect x="1400" y="12" width="16" height="1" fill="#d4d0c8" /><rect x="1400" y="12" width="1" height="14" fill="#d4d0c8" /><rect x="1401" y="13" width="14" height="1" fill="#fff" /><rect x="1401" y="13" width="1" height="12" fill="#fff" /><rect x="1401" y="24" width="14" height="1" fill="#808080" /><rect x="1414" y="13" width="1" height="12" fill="#808080" /><rect x="1400" y="25" width="16" height="1" fill="#404040" /><rect x="1415" y="12" width="1" height="14" fill="#404040" /><rect x="1416" y="12" width="16" height="14" fill="#d4d0c8" /><rect x="1416" y="12" width="16" height="1" fill="#d4d0c8" /><rect x="1416" y="12" width="1" height="14" fill="#d4d0c8" /><rect x="1417" y="13" width="14" height="1" fill="#fff" /><rect x="1417" y="13" width="1" height="12" fill="#fff" /><rect x="1417" y="24" width="14" height="1" fill="#808080" /><rect x="1430" y="13" width="1" height="12" fill="#808080" /><rect x="1416" y="25" width="16" height="1" fill="#404040" /><rect x="1431" y="12" width="1" height="14" fill="#404040" /><rect x="1434" y="12" width="16" height="14" fill="#d4d0c8" /><rect x="1434" y="12" width="16" height="1" fill="#d4d0c8" /><rect x="1434" y="12" width="1" height="14" fill="#d4d0c8" /><rect x="1435" y="13" width="14" height="1" fill="#fff" /><rect x="1435" y="13" width="1" height="12" fill="#fff" /><rect x="1435" y="24" width="14" height="1" fill="#808080" /><rect x="1448" y="13" width="1" height="12" fill="#808080" /><rect x="1434" y="25" width="16" height="1" fill="#404040" /><rect x="1449" y="12" width="1" height="14" fill="#404040" /><rect x="1404" y="21" width="6" height="2" fill="#000" /><rect x="1419.5" y="14.5" width="8" height="8" fill="none" stroke="#000" stroke-width="1" /><rect x="1419" y="14" width="9" height="2" fill="#000" /><polyline points="1438.3,15.3 1445.7,21.7" fill="none" stroke="#000" stroke-width="1.8" /><polyline points="1445.7,15.3 1438.3,21.7" fill="none" stroke="#000" stroke-width="1.8" /><rect x="621" y="610" width="830" height="15" fill="#d4d0c8" /><rect x="621" y="611" width="1" height="14" fill="#fff" /><rect x="626" y="610" width="77" height="1" fill="#000" /><rect x="746" y="610" width="705" height="1" fill="#000" /><rect x="626" y="624" width="120" height="1.2" fill="#000" /><rect x="626" y="610" width="1" height="15" fill="#000" /><rect x="627" y="611" width="14" height="13" fill="#d4d0c8" /><rect x="627" y="611" width="1" height="13" fill="#fff" /><rect x="627" y="611" width="14" height="1" fill="#fff" /><rect x="640" y="611" width="1" height="13" fill="#808080" /><rect x="627" y="623" width="14" height="1" fill="#808080" /><polygon points="631.5,618.5 636.5,618.5 634.0,621.0" fill="#000" /><rect x="641" y="610" width="1" height="15" fill="#000" /><rect x="642" y="611" width="14" height="13" fill="#d4d0c8" /><rect x="642" y="611" width="1" height="13" fill="#fff" /><rect x="642" y="611" width="14" height="1" fill="#fff" /><rect x="655" y="611" width="1" height="13" fill="#808080" /><rect x="642" y="623" width="14" height="1" fill="#808080" /><rect x="646.0" y="614.0" width="1.2" height="7" fill="#000" /><polygon points="647.5,617.5 651.5,613.7 651.5,621.3" fill="#000" /><rect x="656" y="610" width="1" height="15" fill="#000" /><rect x="657" y="611" width="14" height="13" fill="#d4d0c8" /><rect x="657" y="611" width="1" height="13" fill="#fff" /><rect x="657" y="611" width="14" height="1" fill="#fff" /><rect x="670" y="611" width="1" height="13" fill="#808080" /><rect x="657" y="623" width="14" height="1" fill="#808080" /><polygon points="662.0,617.5 666.0,613.7 666.0,621.3" fill="#000" /><rect x="671" y="610" width="1" height="15" fill="#000" /><rect x="672" y="611" width="14" height="13" fill="#d4d0c8" /><rect x="672" y="611" width="1" height="13" fill="#fff" /><rect x="672" y="611" width="14" height="1" fill="#fff" /><rect x="685" y="611" width="1" height="13" fill="#808080" /><rect x="672" y="623" width="14" height="1" fill="#808080" /><polygon points="681.0,617.5 677.0,613.7 677.0,621.3" fill="#000" /><rect x="686" y="610" width="1" height="15" fill="#000" /><rect x="687" y="611" width="14" height="13" fill="#d4d0c8" /><rect x="687" y="611" width="1" height="13" fill="#fff" /><rect x="687" y="611" width="14" height="1" fill="#fff" /><rect x="700" y="611" width="1" height="13" fill="#808080" /><rect x="687" y="623" width="14" height="1" fill="#808080" /><rect x="696.0" y="614.0" width="1.2" height="7" fill="#000" /><polygon points="695.5,617.5 691.5,613.7 691.5,621.3" fill="#000" /><rect x="701" y="610" width="1" height="15" fill="#000" /><polygon points="704,610.5 710,624.5 740,624.5 746,610.5" fill="#fff" stroke="#000" stroke-width="1"/><rect x="705" y="609.6" width="41" height="1.4" fill="#fff" /><text x="712" y="621.4" font-family="Liberation Sans" font-size="11" font-weight="bold" fill="#000" >Main</text><rect x="620" y="625" width="831" height="1" fill="#000" /><rect x="1434" y="610" width="17" height="7" fill="#d4d0c8" /><rect x="1434" y="610" width="17" height="1" fill="#d4d0c8" /><rect x="1434" y="610" width="1" height="7" fill="#d4d0c8" /><rect x="1435" y="611" width="15" height="1" fill="#fff" /><rect x="1435" y="611" width="1" height="5" fill="#fff" /><rect x="1435" y="615" width="15" height="1" fill="#808080" /><rect x="1449" y="611" width="1" height="5" fill="#808080" /><rect x="1434" y="616" width="17" height="1" fill="#000" /><rect x="1450" y="610" width="1" height="7" fill="#000" /></svg>
</body></html>
